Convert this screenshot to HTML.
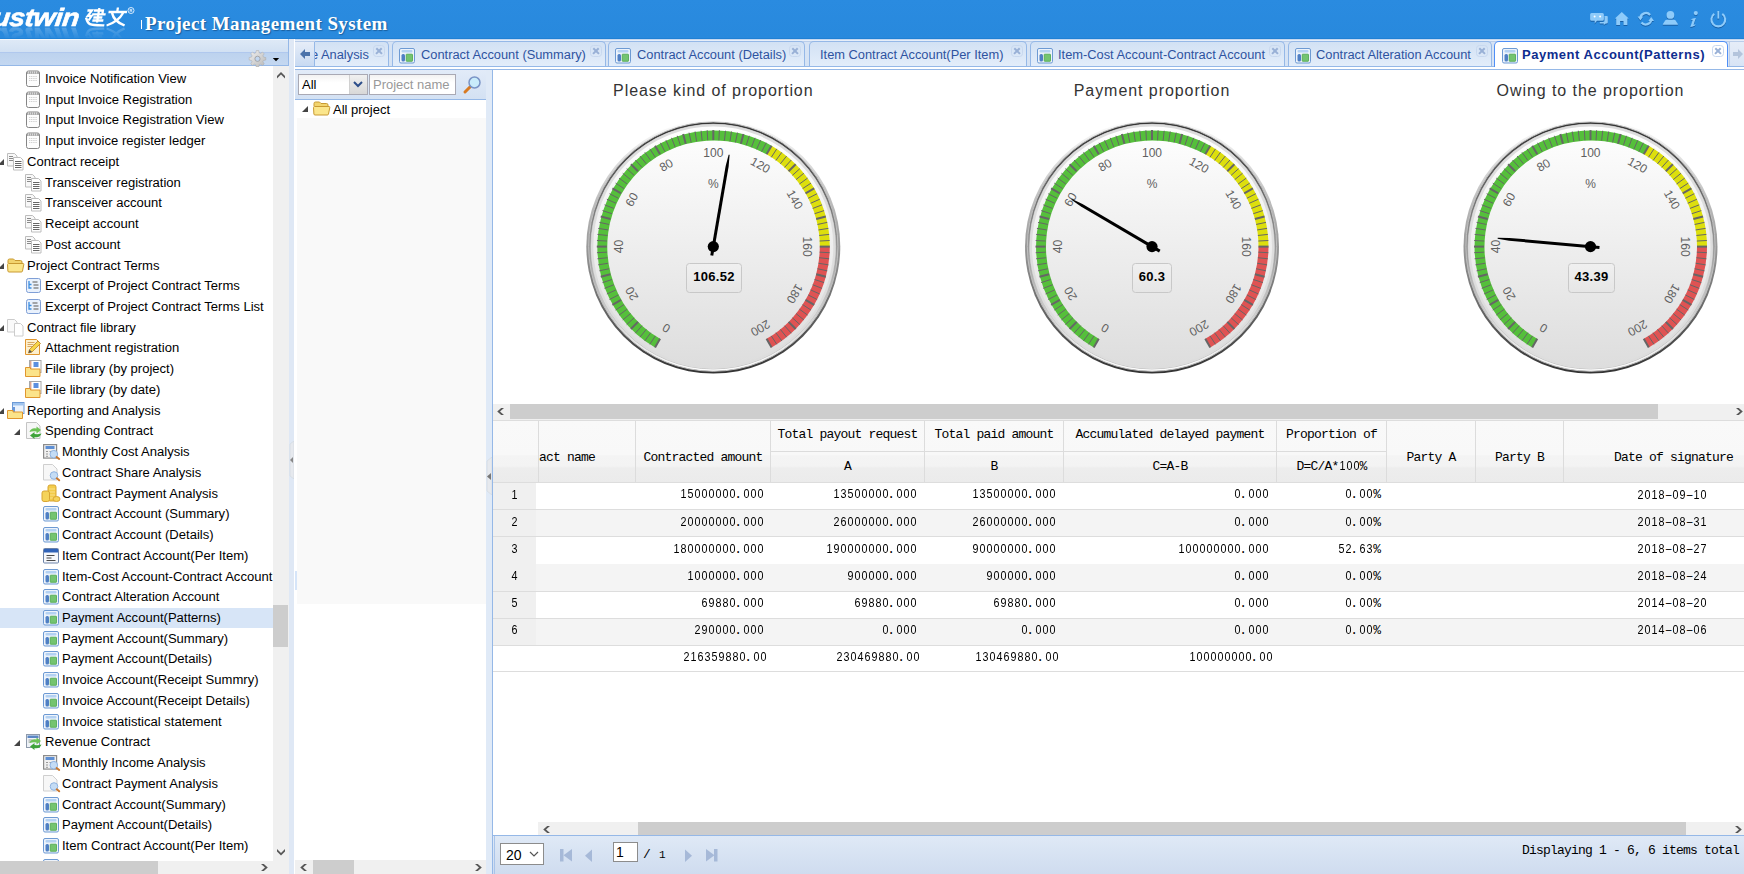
<!DOCTYPE html><html><head><meta charset="utf-8"><style>
*{margin:0;padding:0;box-sizing:border-box}
html,body{width:1744px;height:874px;overflow:hidden;background:#fff;font-family:"Liberation Sans",sans-serif;position:relative}
.a{position:absolute}
#hdr{left:0;top:0;width:1744px;height:39px;background:linear-gradient(#2a8be0 0,#2889dd 97%,#2080d4 97.5%)}
.tt{font-size:13.05px;color:#000;white-space:nowrap;line-height:14px}
.mono{font-family:"Liberation Mono",monospace;font-size:12px;letter-spacing:-0.2px;white-space:nowrap;color:#000}
.nn{white-space:nowrap;font-size:0;line-height:14px;height:14px}
.nd{display:inline-block;width:7px;text-align:center;font:12.8px/14px "Liberation Sans",sans-serif;color:#000;vertical-align:baseline;transform:scaleX(.84)}
.np{display:inline-block;width:7px;text-align:left;font:13px/14px "Liberation Mono",monospace;color:#000;vertical-align:baseline;text-indent:-2px}
.nm{display:inline-block;width:7px;text-align:center;font:13px/14px "Liberation Mono",monospace;color:#000;vertical-align:baseline}
.gl{font-family:"Liberation Sans",sans-serif;font-size:12px;fill:#606060}
.sb{background:#f0f0f0}
.th{background:#cdcdcd}
.tab{top:41px;height:25px;border:1px solid #95b8e7;border-bottom:0;border-radius:5px 5px 0 0;background:linear-gradient(#d2e1f4,#e3edfa)}
.tabt{top:47px;font-size:12.5px;color:#2e53a0;white-space:nowrap;line-height:14px}
.cls{top:45px;width:12px;height:12px;border:1px solid #c8d8ef;border-radius:3.5px}
.cls:before,.cls:after{content:"";position:absolute;left:1px;top:3.8px;width:8px;height:2.4px;background:#98b0d6;transform:rotate(45deg)}
.cls:after{transform:rotate(-45deg)}
</style></head><body>
<div id="hdr" class="a"></div>
<div class="a" style="left:0;top:0;width:140px;height:27px;-webkit-box-reflect:below 0px linear-gradient(transparent 55%,rgba(255,255,255,0.22))">
<div class="a" style="left:-5px;top:2px;font:italic bold 25px/30px 'Liberation Sans',sans-serif;color:#fff;-webkit-text-stroke:0.6px #fff;letter-spacing:-0.4px;transform:scaleX(1.12) skewX(-6deg);transform-origin:0 0">ustwin</div>
<svg class="a" style="left:84px;top:7px;overflow:visible" width="52" height="21" viewBox="0 0 52 21">
<g transform="skewX(-9) translate(2.5,0)" stroke="#fff" stroke-width="2.3" fill="none" stroke-linecap="butt" stroke-linejoin="miter">
<path d="M1.5 3.5h4.5l-3.3 5.3h3.8l-2.3 4.7"/><path d="M1.2 10.5q2.3 5.5 5 6.6 3 1.3 14.5 1.2"/>
<path d="M8 3.5h9v3.8M6.8 7.3h13.5M8.5 10.5h9M8 13.5h11M13 1v14.5"/>
<path d="M31.5 .5v3.3M22.8 5h18.5M26.5 6q3.2 8.5 14.5 12.5M37.5 6q-3.2 8.5 -14.5 12.5"/>
</g><circle cx="47" cy="3.5" r="3" fill="none" stroke="#e8f3ff" stroke-width=".9"/><text x="47" y="5.1" text-anchor="middle" style="font:bold 4.2px 'Liberation Sans'" fill="#e8f3ff">R</text></svg>
</div>
<div class="a" style="left:140.5px;top:20px;width:1.2px;height:9px;background:#fff"></div>
<div class="a" style="left:145px;top:11.5px;font:bold 19px/24px 'Liberation Serif',serif;color:#fff;letter-spacing:0.4px;text-shadow:1px 1px 1px #1a5f9e">Project Management System</div>
<svg class="a" style="left:1580px;top:0px;filter:drop-shadow(0.8px 1px 0.6px rgba(10,60,120,0.55))" width="160" height="39" viewBox="0 0 160 39" fill="#8ecbfa">
<path d="M24.5 16h2.3a1 1 0 0 1 1 1v5.5a1 1 0 0 1-1 1h-1l-2 1.6v-1.6h-4v-1.5h3a1.6 1.6 0 0 0 1.7-1.6z"/>
<path d="M11.6 13h10.8a1.5 1.5 0 0 1 1.5 1.5v4.8a1.5 1.5 0 0 1-1.5 1.5h-5.4l-2.3 2.6v-2.6h-3.1a1.5 1.5 0 0 1-1.5-1.5v-4.8a1.5 1.5 0 0 1 1.5-1.5z"/>
<circle cx="14.6" cy="16.4" r="1" fill="#fff"/><circle cx="20.1" cy="16.4" r="1" fill="#fff"/>
<path d="M41.8 12l6.9 6.6h-1.3v6.4h-3.9v-4h-3.4v4h-3.9v-6.4h-1.3z"/>
<path d="M60.3 18.3a5.6 5.6 0 0 1 9.8-3.4" stroke="#8ecbfa" stroke-width="2.3" fill="none"/><path d="M57.6 16.6h5.6l-2.8 3.8z"/>
<path d="M71.3 19.2a5.6 5.6 0 0 1-9.8 3.4" stroke="#8ecbfa" stroke-width="2.3" fill="none"/><path d="M74 20.9h-5.6l2.8-3.8z"/>
<circle cx="90.4" cy="14.9" r="3.9"/><path d="M86.8 19.8h7.2q1 0 1.6.8l2.3 3.4q.5.8-.5.8h-14q-1 0-.5-.8l2.3-3.4q.6-.8 1.6-.8z"/>
<circle cx="115.8" cy="13.1" r="2.1"/><path d="M110.6 19.6q2.5-1.8 5.3-1.6l-2.2 6.2q-.2.8.6.5l1.2-.6-.5 1.5q-2.3 1.4-4.7 1.3l2.3-6.6q.2-.6-.5-.5z"/>
<path d="M134.3 13.9a6.9 6.9 0 1 0 8 0" stroke="#8ecbfa" stroke-width="2.1" fill="none"/><path d="M138.3 11v7.6" stroke="#8ecbfa" stroke-width="1.8"/>
</svg>
<div class="a" style="left:0;top:39px;width:289px;height:27px;border-right:1px solid #95b8e7;border-bottom:1px solid #95b8e7;background:linear-gradient(#dfeaf7 0,#d2e1f3 48%,#bcd2ee 52%,#c4d8f1 100%)"></div>
<div class="a" style="left:0;top:39px;width:288px;height:1px;background:#f4f8fd"></div>
<div class="a" style="left:0;top:52px;width:288px;height:1px;background:#b0c8ee"></div>
<svg class="a" style="left:248px;top:49px" width="36" height="18" viewBox="0 0 36 18">
<defs><linearGradient id="gearg" x1="0" y1="0" x2="1" y2="1"><stop offset="0" stop-color="#f0f0f0"/><stop offset="1" stop-color="#b8b8b8"/></linearGradient></defs>
<g fill="url(#gearg)" stroke="#a8a8a8" stroke-width=".5">
<path d="M8.3 1.5h2.4l.5 2.3 1.3.6 2-1.3 1.7 1.7-1.3 2 .6 1.3 2.3.5v2.4l-2.3.5-.6 1.3 1.3 2-1.7 1.7-2-1.3-1.3.6-.5 2.3h-2.4l-.5-2.3-1.3-.6-2 1.3-1.7-1.7 1.3-2-.6-1.3-2.3-.5v-2.4l2.3-.5.6-1.3-1.3-2 1.7-1.7 2 1.3 1.3-.6z"/></g>
<circle cx="9.5" cy="9.8" r="2.6" fill="#c2d6ef" stroke="#9a9a9a" stroke-width=".8"/>
<path d="M24.8 8.9h6.4l-3.2 3.3z" fill="#000"/></svg>
<div class="a" style="left:0;top:66px;width:273px;height:795px;overflow:hidden">
<svg class="a" style="left:25px;top:4px;overflow:visible" width="18" height="18" viewBox="0 0 18 18"><rect x="1.5" y="1" width="13" height="15.5" rx="2" fill="#fdfdfd" stroke="#858585"/><rect x="2" y="1.3" width="12" height="2.6" fill="#a6a6a6"/><path d="M3.5 1.5v2M5.5 1.5v2M7.5 1.5v2M9.5 1.5v2M11.5 1.5v2" stroke="#eee" stroke-width=".7"/><path d="M4 6.5h8M4 8.5h8M4 10.5h8" stroke="#d2d2d2" stroke-dasharray="1.2 .6"/></svg>
<div class="a tt" style="left:45px;top:6.0px">Invoice Notification View</div>
<svg class="a" style="left:25px;top:25px;overflow:visible" width="18" height="18" viewBox="0 0 18 18"><rect x="1.5" y="1" width="13" height="15.5" rx="2" fill="#fdfdfd" stroke="#858585"/><rect x="2" y="1.3" width="12" height="2.6" fill="#a6a6a6"/><path d="M3.5 1.5v2M5.5 1.5v2M7.5 1.5v2M9.5 1.5v2M11.5 1.5v2" stroke="#eee" stroke-width=".7"/><path d="M4 6.5h8M4 8.5h8M4 10.5h8" stroke="#d2d2d2" stroke-dasharray="1.2 .6"/></svg>
<div class="a tt" style="left:45px;top:27.0px">Input Invoice Registration</div>
<svg class="a" style="left:25px;top:45px;overflow:visible" width="18" height="18" viewBox="0 0 18 18"><rect x="1.5" y="1" width="13" height="15.5" rx="2" fill="#fdfdfd" stroke="#858585"/><rect x="2" y="1.3" width="12" height="2.6" fill="#a6a6a6"/><path d="M3.5 1.5v2M5.5 1.5v2M7.5 1.5v2M9.5 1.5v2M11.5 1.5v2" stroke="#eee" stroke-width=".7"/><path d="M4 6.5h8M4 8.5h8M4 10.5h8" stroke="#d2d2d2" stroke-dasharray="1.2 .6"/></svg>
<div class="a tt" style="left:45px;top:47.0px">Input Invoice Registration View</div>
<svg class="a" style="left:25px;top:66px;overflow:visible" width="18" height="18" viewBox="0 0 18 18"><rect x="1.5" y="1" width="13" height="15.5" rx="2" fill="#fdfdfd" stroke="#858585"/><rect x="2" y="1.3" width="12" height="2.6" fill="#a6a6a6"/><path d="M3.5 1.5v2M5.5 1.5v2M7.5 1.5v2M9.5 1.5v2M11.5 1.5v2" stroke="#eee" stroke-width=".7"/><path d="M4 6.5h8M4 8.5h8M4 10.5h8" stroke="#d2d2d2" stroke-dasharray="1.2 .6"/></svg>
<div class="a tt" style="left:45px;top:68.0px">Input invoice register ledger</div>
<svg class="a" style="left:-2px;top:92px" width="8" height="8"><path d="M6 1v6h-6z" fill="#444"/></svg>
<svg class="a" style="left:7px;top:87px;overflow:visible" width="18" height="18" viewBox="0 0 18 18"><path d="M.5 .5h7l2.5 2.5v10h-9.5z" fill="#f8f8f8" stroke="#bdbdbd"/><path d="M2 3.5h4M2 5.5h5M2 7.5h4" stroke="#8a8a8a"/><path d="M6.5 4.5h7l2.5 2.5v10h-9.5z" fill="#fff" stroke="#bdbdbd"/><path d="M8 8.5h6.5M8 10.5h6.5M8 12.5h6.5M8 14.5h6.5" stroke="#666"/></svg>
<div class="a tt" style="left:27px;top:89.0px">Contract receipt</div>
<svg class="a" style="left:25px;top:108px;overflow:visible" width="18" height="18" viewBox="0 0 18 18"><path d="M.5 .5h7l2.5 2.5v10h-9.5z" fill="#f8f8f8" stroke="#bdbdbd"/><path d="M2 3.5h4M2 5.5h5M2 7.5h4" stroke="#8a8a8a"/><path d="M6.5 4.5h7l2.5 2.5v10h-9.5z" fill="#fff" stroke="#bdbdbd"/><path d="M8 8.5h6.5M8 10.5h6.5M8 12.5h6.5M8 14.5h6.5" stroke="#666"/></svg>
<div class="a tt" style="left:45px;top:110.0px">Transceiver registration</div>
<svg class="a" style="left:25px;top:128px;overflow:visible" width="18" height="18" viewBox="0 0 18 18"><path d="M.5 .5h7l2.5 2.5v10h-9.5z" fill="#f8f8f8" stroke="#bdbdbd"/><path d="M2 3.5h4M2 5.5h5M2 7.5h4" stroke="#8a8a8a"/><path d="M6.5 4.5h7l2.5 2.5v10h-9.5z" fill="#fff" stroke="#bdbdbd"/><path d="M8 8.5h6.5M8 10.5h6.5M8 12.5h6.5M8 14.5h6.5" stroke="#666"/></svg>
<div class="a tt" style="left:45px;top:130.0px">Transceiver account</div>
<svg class="a" style="left:25px;top:149px;overflow:visible" width="18" height="18" viewBox="0 0 18 18"><path d="M.5 .5h7l2.5 2.5v10h-9.5z" fill="#f8f8f8" stroke="#bdbdbd"/><path d="M2 3.5h4M2 5.5h5M2 7.5h4" stroke="#8a8a8a"/><path d="M6.5 4.5h7l2.5 2.5v10h-9.5z" fill="#fff" stroke="#bdbdbd"/><path d="M8 8.5h6.5M8 10.5h6.5M8 12.5h6.5M8 14.5h6.5" stroke="#666"/></svg>
<div class="a tt" style="left:45px;top:151.0px">Receipt account</div>
<svg class="a" style="left:25px;top:170px;overflow:visible" width="18" height="18" viewBox="0 0 18 18"><path d="M.5 .5h7l2.5 2.5v10h-9.5z" fill="#f8f8f8" stroke="#bdbdbd"/><path d="M2 3.5h4M2 5.5h5M2 7.5h4" stroke="#8a8a8a"/><path d="M6.5 4.5h7l2.5 2.5v10h-9.5z" fill="#fff" stroke="#bdbdbd"/><path d="M8 8.5h6.5M8 10.5h6.5M8 12.5h6.5M8 14.5h6.5" stroke="#666"/></svg>
<div class="a tt" style="left:45px;top:172.0px">Post account</div>
<svg class="a" style="left:-2px;top:196px" width="8" height="8"><path d="M6 1v6h-6z" fill="#444"/></svg>
<svg class="a" style="left:7px;top:191px;overflow:visible" width="18" height="18" viewBox="0 0 18 18"><path d="M1 6v-2.5q0-1.5 1.5-1.5h4l1.5 1.5h5.5q1.5 0 1.5 1.5v1" fill="#f2d46e" stroke="#c99a32"/><path d="M.5 7.5q0-1 1-1h14.5q1 0 .8 1l-1.3 6.5q-.2 1-1.2 1h-12.3q-1 0-1.1-1z" fill="#fbe68c" stroke="#c99a32"/></svg>
<div class="a tt" style="left:27px;top:193.0px">Project Contract Terms</div>
<svg class="a" style="left:25px;top:211px;overflow:visible" width="18" height="18" viewBox="0 0 18 18"><rect x="1.5" y="1.5" width="14" height="14" rx="2" fill="#e9f1fc" stroke="#7f9fd6"/><path d="M4 4v7h2.5M4 7.5h2.5" stroke="#3d8fe0" stroke-width="1.3" fill="none"/><path d="M7.5 5h5M8.5 8h5M8.5 11h5" stroke="#8a8a8a" stroke-width="1.5"/></svg>
<div class="a tt" style="left:45px;top:213.0px">Excerpt of Project Contract Terms</div>
<svg class="a" style="left:25px;top:232px;overflow:visible" width="18" height="18" viewBox="0 0 18 18"><rect x="1.5" y="1.5" width="14" height="14" rx="2" fill="#e9f1fc" stroke="#7f9fd6"/><path d="M4 4v7h2.5M4 7.5h2.5" stroke="#3d8fe0" stroke-width="1.3" fill="none"/><path d="M7.5 5h5M8.5 8h5M8.5 11h5" stroke="#8a8a8a" stroke-width="1.5"/></svg>
<div class="a tt" style="left:45px;top:234.0px">Excerpt of Project Contract Terms List</div>
<svg class="a" style="left:-2px;top:258px" width="8" height="8"><path d="M6 1v6h-6z" fill="#444"/></svg>
<svg class="a" style="left:7px;top:253px;overflow:visible" width="18" height="18" viewBox="0 0 18 18"><path d="M.5 .5h7l2.5 2.5v10h-9.5z" fill="#fafafa" stroke="#cccccc"/><path d="M7.5 4.5h6l2.5 2.5v10h-8.5z" fill="#fff" stroke="#cccccc"/></svg>
<div class="a tt" style="left:27px;top:255.0px">Contract file library</div>
<svg class="a" style="left:25px;top:273px;overflow:visible" width="18" height="18" viewBox="0 0 18 18"><path d="M.5 .5h11l3 3v12h-14z" fill="#fdf0cf" stroke="#e0962e"/><path d="M2.5 3.5h7M2.5 5.5h6M2.5 7.5h5" stroke="#d9a860"/><path d="M3.5 14l1-3.5 8.5-8.5 2.5 2.5-8.5 8.5z" fill="#f7d548" stroke="#b9812a" stroke-width=".8"/><path d="M3.5 14l1-3.5 2.5 2.5z" fill="#555"/></svg>
<div class="a tt" style="left:45px;top:275.0px">Attachment registration</div>
<svg class="a" style="left:25px;top:294px;overflow:visible" width="18" height="18" viewBox="0 0 18 18"><rect x="4.5" y=".5" width="11.5" height="12" fill="#fff" stroke="#a8a8a8"/><rect x="8.5" y="2" width="5" height="5" fill="#5b8fe0"/><path d="M5.8 1v8" stroke="#c0603b" stroke-width=".8"/><path d="M.5 7.5h5v1.5h9.5v7.5h-14.5z" fill="#fbe38a" stroke="#e0962e"/></svg>
<div class="a tt" style="left:45px;top:296.0px">File library (by project)</div>
<svg class="a" style="left:25px;top:315px;overflow:visible" width="18" height="18" viewBox="0 0 18 18"><rect x="4.5" y=".5" width="11.5" height="12" fill="#fff" stroke="#a8a8a8"/><rect x="8.5" y="2" width="5" height="5" fill="#5b8fe0"/><path d="M5.8 1v8" stroke="#c0603b" stroke-width=".8"/><path d="M.5 7.5h5v1.5h9.5v7.5h-14.5z" fill="#fbe38a" stroke="#e0962e"/></svg>
<div class="a tt" style="left:45px;top:317.0px">File library (by date)</div>
<svg class="a" style="left:-2px;top:341px" width="8" height="8"><path d="M6 1v6h-6z" fill="#444"/></svg>
<svg class="a" style="left:7px;top:336px;overflow:visible" width="18" height="18" viewBox="0 0 18 18"><rect x="5.5" y=".5" width="11.5" height="11" fill="#eaf2fc" stroke="#6c9ad6"/><rect x="6" y="1" width="10.5" height="2.5" fill="#9fc4ef"/><path d="M7 5v5" stroke="#3e7ad0" stroke-width="1.5"/><path d="M.5 8.5h5.5v1.5h9.5v6.5h-15z" fill="#fbe38a" stroke="#e0962e"/></svg>
<div class="a tt" style="left:27px;top:338.0px">Reporting and Analysis</div>
<svg class="a" style="left:13px;top:361.5px" width="8" height="8"><path d="M7 1v6h-6z" fill="#444"/></svg>
<svg class="a" style="left:25px;top:356px;overflow:visible" width="18" height="18" viewBox="0 0 18 18"><path d="M1.5 .5h10l3.5 3.5v12.5h-13.5z" fill="#f6f6f6" stroke="#c4c4c4"/><path d="M4.5 10q1.5-4.5 7-3.5v-2l4.5 3.5-4.5 3.5v-2q-4-.5-7 .5z" fill="#6cc255"/><path d="M16.5 11.5q-1.5 4.5-7 3.5v2l-4.5-3.5 4.5-3.5v2q4 .5 7-.5z" fill="#3ea33a"/></svg>
<div class="a tt" style="left:45px;top:358.0px">Spending Contract</div>
<svg class="a" style="left:43px;top:377px;overflow:visible" width="18" height="18" viewBox="0 0 18 18"><rect x=".6" y="1.6" width="13" height="13.5" fill="#f0f0f0" stroke="#8c8c8c" stroke-width="1.2"/><rect x="2.5" y="3" width="9" height="3" fill="#5e8fd4"/><path d="M3 8.5h2M6.5 8.5h2M3 11h2M3 13.3h2" stroke="#999"/><circle cx="10.8" cy="11.2" r="3.8" fill="#c4dcf5" stroke="#8fb3e0"/><path d="M13.6 14l2.6 2" stroke="#c9772e" stroke-width="2" stroke-linecap="round"/></svg>
<div class="a tt" style="left:62px;top:379.0px">Monthly Cost Analysis</div>
<svg class="a" style="left:43px;top:398px;overflow:visible" width="18" height="18" viewBox="0 0 18 18"><path d="M.5 .5h9l4.5 4.5v11h-13.5z" fill="#f7f7f7" stroke="#cfcfcf"/><circle cx="11" cy="11.5" r="3.8" fill="#c4dcf5" stroke="#8fb3e0"/><path d="M13.8 14.3l2.4 2" stroke="#c9772e" stroke-width="2" stroke-linecap="round"/></svg>
<div class="a tt" style="left:62px;top:400.0px">Contract Share Analysis</div>
<svg class="a" style="left:43px;top:419px;overflow:visible" width="18" height="18" viewBox="0 0 18 18"><rect x="5" y="0" width="8" height="16" rx="2" fill="#f3cc4a" stroke="#d8a532"/><path d="M6 4h6M6 7h6M6 10h6M6 13h6" stroke="#f9e49a" stroke-width=".8"/><rect x="-1" y="6" width="7.5" height="10.5" rx="2" fill="#f5d35a" stroke="#d8a532"/><ellipse cx="13.5" cy="14" rx="3.5" ry="2.5" fill="#f5d35a" stroke="#d8a532"/></svg>
<div class="a tt" style="left:62px;top:421.0px">Contract Payment Analysis</div>
<svg class="a" style="left:43px;top:439px;overflow:visible" width="18" height="18" viewBox="0 0 18 18"><rect x=".5" y="1.5" width="15" height="14.5" rx="1.5" fill="#edf3fb" stroke="#6d9ad3"/><rect x="2.5" y="3" width="11" height="2.5" rx="1" fill="#b3d1f2"/><rect x="2.5" y="7" width="3.5" height="7.5" rx="1.5" fill="#4f7fc4"/><rect x="7.2" y="7.2" width="6.3" height="7.1" rx=".5" fill="#74c470" stroke="#4aa64a" stroke-width=".8"/></svg>
<div class="a tt" style="left:62px;top:441.0px">Contract Account (Summary)</div>
<svg class="a" style="left:43px;top:460px;overflow:visible" width="18" height="18" viewBox="0 0 18 18"><rect x=".5" y="1.5" width="15" height="14.5" rx="1.5" fill="#edf3fb" stroke="#6d9ad3"/><rect x="2.5" y="3" width="11" height="2.5" rx="1" fill="#b3d1f2"/><rect x="2.5" y="7" width="3.5" height="7.5" rx="1.5" fill="#4f7fc4"/><rect x="7.2" y="7.2" width="6.3" height="7.1" rx=".5" fill="#74c470" stroke="#4aa64a" stroke-width=".8"/></svg>
<div class="a tt" style="left:62px;top:462.0px">Contract Account (Details)</div>
<svg class="a" style="left:43px;top:481px;overflow:visible" width="18" height="18" viewBox="0 0 18 18"><rect x=".5" y="1.5" width="15" height="14.5" rx="1" fill="#f5f7fb" stroke="#6c83a8"/><rect x="1" y="2" width="14" height="3.5" fill="#2f62b8"/><path d="M3.5 8.5h8M3.5 11h5M3.5 13.5h9" stroke="#4a4a4a" stroke-width="1.1"/></svg>
<div class="a tt" style="left:62px;top:483.0px">Item Contract Account(Per Item)</div>
<svg class="a" style="left:43px;top:502px;overflow:visible" width="18" height="18" viewBox="0 0 18 18"><rect x=".5" y="1.5" width="15" height="14.5" rx="1.5" fill="#edf3fb" stroke="#6d9ad3"/><rect x="2.5" y="3" width="11" height="2.5" rx="1" fill="#b3d1f2"/><rect x="2.5" y="7" width="3.5" height="7.5" rx="1.5" fill="#4f7fc4"/><rect x="7.2" y="7.2" width="6.3" height="7.1" rx=".5" fill="#74c470" stroke="#4aa64a" stroke-width=".8"/></svg>
<div class="a tt" style="left:62px;top:504.0px">Item-Cost Account-Contract Account</div>
<svg class="a" style="left:43px;top:522px;overflow:visible" width="18" height="18" viewBox="0 0 18 18"><rect x=".5" y="1.5" width="15" height="14.5" rx="1.5" fill="#edf3fb" stroke="#6d9ad3"/><rect x="2.5" y="3" width="11" height="2.5" rx="1" fill="#b3d1f2"/><rect x="2.5" y="7" width="3.5" height="7.5" rx="1.5" fill="#4f7fc4"/><rect x="7.2" y="7.2" width="6.3" height="7.1" rx=".5" fill="#74c470" stroke="#4aa64a" stroke-width=".8"/></svg>
<div class="a tt" style="left:62px;top:524.0px">Contract Alteration Account</div>
<div class="a" style="left:0;top:542px;width:273px;height:20px;background:#d7e5f7"></div>
<svg class="a" style="left:43px;top:543px;overflow:visible" width="18" height="18" viewBox="0 0 18 18"><rect x=".5" y="1.5" width="15" height="14.5" rx="1.5" fill="#edf3fb" stroke="#6d9ad3"/><rect x="2.5" y="3" width="11" height="2.5" rx="1" fill="#b3d1f2"/><rect x="2.5" y="7" width="3.5" height="7.5" rx="1.5" fill="#4f7fc4"/><rect x="7.2" y="7.2" width="6.3" height="7.1" rx=".5" fill="#74c470" stroke="#4aa64a" stroke-width=".8"/></svg>
<div class="a tt" style="left:62px;top:545.0px">Payment Account(Patterns)</div>
<svg class="a" style="left:43px;top:564px;overflow:visible" width="18" height="18" viewBox="0 0 18 18"><rect x=".5" y="1.5" width="15" height="14.5" rx="1.5" fill="#edf3fb" stroke="#6d9ad3"/><rect x="2.5" y="3" width="11" height="2.5" rx="1" fill="#b3d1f2"/><rect x="2.5" y="7" width="3.5" height="7.5" rx="1.5" fill="#4f7fc4"/><rect x="7.2" y="7.2" width="6.3" height="7.1" rx=".5" fill="#74c470" stroke="#4aa64a" stroke-width=".8"/></svg>
<div class="a tt" style="left:62px;top:566.0px">Payment Account(Summary)</div>
<svg class="a" style="left:43px;top:584px;overflow:visible" width="18" height="18" viewBox="0 0 18 18"><rect x=".5" y="1.5" width="15" height="14.5" rx="1.5" fill="#edf3fb" stroke="#6d9ad3"/><rect x="2.5" y="3" width="11" height="2.5" rx="1" fill="#b3d1f2"/><rect x="2.5" y="7" width="3.5" height="7.5" rx="1.5" fill="#4f7fc4"/><rect x="7.2" y="7.2" width="6.3" height="7.1" rx=".5" fill="#74c470" stroke="#4aa64a" stroke-width=".8"/></svg>
<div class="a tt" style="left:62px;top:586.0px">Payment Account(Details)</div>
<svg class="a" style="left:43px;top:605px;overflow:visible" width="18" height="18" viewBox="0 0 18 18"><rect x=".5" y="1.5" width="15" height="14.5" rx="1.5" fill="#edf3fb" stroke="#6d9ad3"/><rect x="2.5" y="3" width="11" height="2.5" rx="1" fill="#b3d1f2"/><rect x="2.5" y="7" width="3.5" height="7.5" rx="1.5" fill="#4f7fc4"/><rect x="7.2" y="7.2" width="6.3" height="7.1" rx=".5" fill="#74c470" stroke="#4aa64a" stroke-width=".8"/></svg>
<div class="a tt" style="left:62px;top:607.0px">Invoice Account(Receipt Summry)</div>
<svg class="a" style="left:43px;top:626px;overflow:visible" width="18" height="18" viewBox="0 0 18 18"><rect x=".5" y="1.5" width="15" height="14.5" rx="1.5" fill="#edf3fb" stroke="#6d9ad3"/><rect x="2.5" y="3" width="11" height="2.5" rx="1" fill="#b3d1f2"/><rect x="2.5" y="7" width="3.5" height="7.5" rx="1.5" fill="#4f7fc4"/><rect x="7.2" y="7.2" width="6.3" height="7.1" rx=".5" fill="#74c470" stroke="#4aa64a" stroke-width=".8"/></svg>
<div class="a tt" style="left:62px;top:628.0px">Invoice Account(Receipt Details)</div>
<svg class="a" style="left:43px;top:647px;overflow:visible" width="18" height="18" viewBox="0 0 18 18"><rect x=".5" y="1.5" width="15" height="14.5" rx="1.5" fill="#edf3fb" stroke="#6d9ad3"/><rect x="2.5" y="3" width="11" height="2.5" rx="1" fill="#b3d1f2"/><rect x="2.5" y="7" width="3.5" height="7.5" rx="1.5" fill="#4f7fc4"/><rect x="7.2" y="7.2" width="6.3" height="7.1" rx=".5" fill="#74c470" stroke="#4aa64a" stroke-width=".8"/></svg>
<div class="a tt" style="left:62px;top:649.0px">Invoice statistical statement</div>
<svg class="a" style="left:13px;top:672.5px" width="8" height="8"><path d="M7 1v6h-6z" fill="#444"/></svg>
<svg class="a" style="left:25px;top:667px;overflow:visible" width="18" height="18" viewBox="0 0 18 18"><rect x="1.5" y="1.5" width="13" height="13" fill="#eef2f7" stroke="#8e9aab"/><rect x="2.5" y="2.5" width="11" height="2.5" fill="#5a86c4"/><path d="M3.5 7h4M3.5 9h3" stroke="#999"/><path d="M4.5 10q1.5-4.5 7-3.5v-2l4.5 3.5-4.5 3.5v-2q-4-.5-7 .5z" fill="#6cc255"/><path d="M16.5 11.5q-1.5 4.5-7 3.5v2l-4.5-3.5 4.5-3.5v2q4 .5 7-.5z" fill="#3ea33a"/></svg>
<div class="a tt" style="left:45px;top:669.0px">Revenue Contract</div>
<svg class="a" style="left:43px;top:688px;overflow:visible" width="18" height="18" viewBox="0 0 18 18"><rect x=".6" y="1.6" width="13" height="13.5" fill="#f0f0f0" stroke="#8c8c8c" stroke-width="1.2"/><rect x="2.5" y="3" width="9" height="3" fill="#5e8fd4"/><path d="M3 8.5h2M6.5 8.5h2M3 11h2M3 13.3h2" stroke="#999"/><circle cx="10.8" cy="11.2" r="3.8" fill="#c4dcf5" stroke="#8fb3e0"/><path d="M13.6 14l2.6 2" stroke="#c9772e" stroke-width="2" stroke-linecap="round"/></svg>
<div class="a tt" style="left:62px;top:690.0px">Monthly Income Analysis</div>
<svg class="a" style="left:43px;top:709px;overflow:visible" width="18" height="18" viewBox="0 0 18 18"><path d="M.5 .5h9l4.5 4.5v11h-13.5z" fill="#f7f7f7" stroke="#cfcfcf"/><circle cx="11" cy="11.5" r="3.8" fill="#c4dcf5" stroke="#8fb3e0"/><path d="M13.8 14.3l2.4 2" stroke="#c9772e" stroke-width="2" stroke-linecap="round"/></svg>
<div class="a tt" style="left:62px;top:711.0px">Contract Payment Analysis</div>
<svg class="a" style="left:43px;top:730px;overflow:visible" width="18" height="18" viewBox="0 0 18 18"><rect x=".5" y="1.5" width="15" height="14.5" rx="1.5" fill="#edf3fb" stroke="#6d9ad3"/><rect x="2.5" y="3" width="11" height="2.5" rx="1" fill="#b3d1f2"/><rect x="2.5" y="7" width="3.5" height="7.5" rx="1.5" fill="#4f7fc4"/><rect x="7.2" y="7.2" width="6.3" height="7.1" rx=".5" fill="#74c470" stroke="#4aa64a" stroke-width=".8"/></svg>
<div class="a tt" style="left:62px;top:732.0px">Contract Account(Summary)</div>
<svg class="a" style="left:43px;top:750px;overflow:visible" width="18" height="18" viewBox="0 0 18 18"><rect x=".5" y="1.5" width="15" height="14.5" rx="1.5" fill="#edf3fb" stroke="#6d9ad3"/><rect x="2.5" y="3" width="11" height="2.5" rx="1" fill="#b3d1f2"/><rect x="2.5" y="7" width="3.5" height="7.5" rx="1.5" fill="#4f7fc4"/><rect x="7.2" y="7.2" width="6.3" height="7.1" rx=".5" fill="#74c470" stroke="#4aa64a" stroke-width=".8"/></svg>
<div class="a tt" style="left:62px;top:752.0px">Payment Account(Details)</div>
<svg class="a" style="left:43px;top:771px;overflow:visible" width="18" height="18" viewBox="0 0 18 18"><rect x=".5" y="1.5" width="15" height="14.5" rx="1.5" fill="#edf3fb" stroke="#6d9ad3"/><rect x="2.5" y="3" width="11" height="2.5" rx="1" fill="#b3d1f2"/><rect x="2.5" y="7" width="3.5" height="7.5" rx="1.5" fill="#4f7fc4"/><rect x="7.2" y="7.2" width="6.3" height="7.1" rx=".5" fill="#74c470" stroke="#4aa64a" stroke-width=".8"/></svg>
<div class="a tt" style="left:62px;top:773.0px">Item Contract Account(Per Item)</div>
<svg class="a" style="left:43px;top:792px;overflow:visible" width="18" height="18" viewBox="0 0 18 18"><rect x=".5" y="1.5" width="15" height="14.5" rx="1.5" fill="#edf3fb" stroke="#6d9ad3"/><rect x="2.5" y="3" width="11" height="2.5" rx="1" fill="#b3d1f2"/><rect x="2.5" y="7" width="3.5" height="7.5" rx="1.5" fill="#4f7fc4"/><rect x="7.2" y="7.2" width="6.3" height="7.1" rx=".5" fill="#74c470" stroke="#4aa64a" stroke-width=".8"/></svg>
</div>
<div class="a sb" style="left:273px;top:66px;width:16px;height:808px"></div>
<div class="a th" style="left:273px;top:605px;width:15px;height:42px"></div>
<svg class="a" style="left:277px;top:72px" width="8" height="7"><path d="M0 4l4-4 4 4v2.5l-4-4-4 4z" fill="#575757"/></svg>
<svg class="a" style="left:277px;top:849px" width="8" height="7"><path d="M0 0l4 4 4-4v2.5l-4 4-4-4z" fill="#575757"/></svg>
<div class="a sb" style="left:0;top:861px;width:273px;height:13px"></div>
<div class="a th" style="left:0;top:861px;width:158px;height:13px"></div>
<svg class="a" style="left:261px;top:864px" width="8" height="7"><path d="M0 0h2.8l4 3.5-4 3.5h-2.8l4-3.5z" fill="#575757"/></svg>
<div class="a" style="left:289px;top:39px;width:5px;height:835px;background:#dfe8f5"></div>
<div class="a" style="left:294px;top:39px;width:1px;height:835px;background:#fff"></div>
<svg class="a" style="left:289px;top:441px" width="5" height="38"><path d="M5 0v38l-4-3v-32z" fill="#e6e9ee" stroke="#d0d6de" stroke-width=".6"/><path d="M4 16v6l-3-3z" fill="#888"/></svg>
<div class="a" style="left:295px;top:39px;width:1449px;height:28px;background:#d6e3f4;border-bottom:1px solid #95b8e7"></div>
<div class="a" style="left:295px;top:39px;width:1449px;height:1px;background:#c6d8f0"></div>
<div class="a" style="left:295px;top:40px;width:1449px;height:1px;background:#e6eef9"></div>
<div class="a" style="left:295px;top:41px;width:1449px;height:1px;background:#b9cdea"></div>
<div class="a" style="left:295px;top:67px;width:1449px;height:2px;background:#fff"></div>
<div class="a" style="left:295px;top:69px;width:1449px;height:1px;background:#95b8e7"></div>
<div class="a" style="left:295px;top:42px;width:20px;height:24px;background:linear-gradient(#e6edf8,#c8daf2);border-right:1px solid #95b8e7"></div>
<svg class="a" style="left:299px;top:48px" width="12" height="12"><path d="M1 6l5-5v3h5v4h-5v3z" fill="#4b73ab"/></svg>
<div class="a" style="left:1729px;top:42px;width:15px;height:24px;background:linear-gradient(#e6edf8,#d8e4f5);border-left:1px solid #b9cdea"></div>
<svg class="a" style="left:1733px;top:48px" width="11" height="12"><path d="M10 6l-5-5v3h-5v4h5v3z" fill="#b4c4dc"/></svg>
<div class="a" style="left:315px;top:41px;width:1414px;height:26px;overflow:hidden">
<div class="a tab" style="left:-20px;top:0;width:94px;height:25px"></div>
<div class="a" style="left:-4px;top:7px;font-size:12.85px;color:#2e53a0;white-space:nowrap;line-height:14px">e Analysis</div>
<div class="a cls" style="left:58px;top:4px"></div>
<div class="a tab" style="left:77px;top:0;width:214px;height:25px"></div>
<svg class="a" style="left:84px;top:6px;overflow:visible" width="18" height="18" viewBox="0 0 18 18"><rect x=".5" y="1.5" width="15" height="14.5" rx="1.5" fill="#edf3fb" stroke="#6d9ad3"/><rect x="2.5" y="3" width="11" height="2.5" rx="1" fill="#b3d1f2"/><rect x="2.5" y="7" width="3.5" height="7.5" rx="1.5" fill="#4f7fc4"/><rect x="7.2" y="7.2" width="6.3" height="7.1" rx=".5" fill="#74c470" stroke="#4aa64a" stroke-width=".8"/></svg>
<div class="a" style="left:106px;top:7px;font-size:12.85px;color:#2e53a0;white-space:nowrap;line-height:14px">Contract Account (Summary)</div>
<div class="a cls" style="left:275px;top:4px"></div>
<div class="a tab" style="left:293px;top:0;width:197px;height:25px"></div>
<svg class="a" style="left:300px;top:6px;overflow:visible" width="18" height="18" viewBox="0 0 18 18"><rect x=".5" y="1.5" width="15" height="14.5" rx="1.5" fill="#edf3fb" stroke="#6d9ad3"/><rect x="2.5" y="3" width="11" height="2.5" rx="1" fill="#b3d1f2"/><rect x="2.5" y="7" width="3.5" height="7.5" rx="1.5" fill="#4f7fc4"/><rect x="7.2" y="7.2" width="6.3" height="7.1" rx=".5" fill="#74c470" stroke="#4aa64a" stroke-width=".8"/></svg>
<div class="a" style="left:322px;top:7px;font-size:12.85px;color:#2e53a0;white-space:nowrap;line-height:14px">Contract Account (Details)</div>
<div class="a cls" style="left:474px;top:4px"></div>
<div class="a tab" style="left:494px;top:0;width:218px;height:25px"></div>
<div class="a" style="left:505px;top:7px;font-size:12.85px;color:#2e53a0;white-space:nowrap;line-height:14px">Item Contract Account(Per Item)</div>
<div class="a cls" style="left:696px;top:4px"></div>
<div class="a tab" style="left:715px;top:0;width:255px;height:25px"></div>
<svg class="a" style="left:722px;top:6px;overflow:visible" width="18" height="18" viewBox="0 0 18 18"><rect x=".5" y="1.5" width="15" height="14.5" rx="1.5" fill="#edf3fb" stroke="#6d9ad3"/><rect x="2.5" y="3" width="11" height="2.5" rx="1" fill="#b3d1f2"/><rect x="2.5" y="7" width="3.5" height="7.5" rx="1.5" fill="#4f7fc4"/><rect x="7.2" y="7.2" width="6.3" height="7.1" rx=".5" fill="#74c470" stroke="#4aa64a" stroke-width=".8"/></svg>
<div class="a" style="left:743px;top:7px;font-size:12.85px;color:#2e53a0;white-space:nowrap;line-height:14px">Item-Cost Account-Contract Account</div>
<div class="a cls" style="left:954px;top:4px"></div>
<div class="a tab" style="left:973px;top:0;width:204px;height:25px"></div>
<svg class="a" style="left:980px;top:6px;overflow:visible" width="18" height="18" viewBox="0 0 18 18"><rect x=".5" y="1.5" width="15" height="14.5" rx="1.5" fill="#edf3fb" stroke="#6d9ad3"/><rect x="2.5" y="3" width="11" height="2.5" rx="1" fill="#b3d1f2"/><rect x="2.5" y="7" width="3.5" height="7.5" rx="1.5" fill="#4f7fc4"/><rect x="7.2" y="7.2" width="6.3" height="7.1" rx=".5" fill="#74c470" stroke="#4aa64a" stroke-width=".8"/></svg>
<div class="a" style="left:1001px;top:7px;font-size:12.85px;color:#2e53a0;white-space:nowrap;line-height:14px">Contract Alteration Account</div>
<div class="a cls" style="left:1161px;top:4px"></div>
<div class="a" style="left:1179px;top:0;width:234px;height:27px;border:1px solid #4f8ff7;border-bottom:0;border-radius:5px 5px 0 0;background:#fff"></div>
<svg class="a" style="left:1187px;top:6px;overflow:visible" width="18" height="18" viewBox="0 0 18 18"><rect x=".5" y="1.5" width="15" height="14.5" rx="1.5" fill="#edf3fb" stroke="#6d9ad3"/><rect x="2.5" y="3" width="11" height="2.5" rx="1" fill="#b3d1f2"/><rect x="2.5" y="7" width="3.5" height="7.5" rx="1.5" fill="#4f7fc4"/><rect x="7.2" y="7.2" width="6.3" height="7.1" rx=".5" fill="#74c470" stroke="#4aa64a" stroke-width=".8"/></svg>
<div class="a" style="left:1207px;top:7px;font-size:13px;font-weight:bold;letter-spacing:0.52px;color:#0e2d8f;white-space:nowrap;line-height:14px">Payment Account(Patterns)</div>
<div class="a cls" style="left:1397px;top:4px"></div>
</div>
<div class="a" style="left:295px;top:70px;width:191px;height:30px;background:linear-gradient(#e2ebf8,#d3e1f3);border-bottom:1px solid #95b8e7"></div>
<div class="a" style="left:298px;top:74px;width:70px;height:21px;border:1px solid #a9a9b4;background:linear-gradient(#f2f2f2,#fff 40%)"></div>
<div class="a" style="left:349px;top:75px;width:18px;height:19px;background:linear-gradient(#f0f0f0,#d8d8d8);border-left:1px solid #d0d0d0"></div>
<svg class="a" style="left:352px;top:80px" width="12" height="10"><path d="M2 2l4 4 4-4" stroke="#2d4e8a" stroke-width="2" fill="none"/></svg>
<div class="a" style="left:302px;top:78px;font-size:13px;line-height:14px;color:#000">All</div>
<div class="a" style="left:369px;top:74px;width:87px;height:21px;border:1px solid #a9a9b4;background:linear-gradient(#f2f2f2,#fff 40%)"></div>
<div class="a" style="left:373px;top:78px;font-size:13px;line-height:14px;color:#999">Project name</div>
<svg class="a" style="left:462px;top:75px" width="20" height="20"><path d="M3 17l5-5" stroke="#d87a22" stroke-width="3" stroke-linecap="round"/><circle cx="12.5" cy="7.5" r="5.5" fill="#c9ecfb" stroke="#7a94c6" stroke-width="1.5"/></svg>
<div class="a" style="left:295px;top:100px;width:191px;height:774px;background:#fff"></div>
<div class="a" style="left:297px;top:118px;width:189px;height:486px;background:#f9f9f9"></div>
<svg class="a" style="left:301px;top:105px" width="8" height="8"><path d="M7 1v6h-6z" fill="#444"/></svg>
<svg class="a" style="left:313px;top:100px;overflow:visible" width="18" height="18" viewBox="0 0 18 18"><path d="M1 6v-2.5q0-1.5 1.5-1.5h4l1.5 1.5h5.5q1.5 0 1.5 1.5v1" fill="#f2d46e" stroke="#c99a32"/><path d="M.5 7.5q0-1 1-1h14.5q1 0 .8 1l-1.3 6.5q-.2 1-1.2 1h-12.3q-1 0-1.1-1z" fill="#fbe68c" stroke="#c99a32"/></svg>
<div class="a tt" style="left:333px;top:103px;font-size:13px">All project</div>
<div class="a" style="left:295px;top:571px;width:2px;height:19px;background:#d6e5f9"></div>
<div class="a sb" style="left:295px;top:860px;width:191px;height:14px"></div>
<div class="a th" style="left:313px;top:860px;width:41px;height:14px"></div>
<svg class="a" style="left:300px;top:864px" width="8" height="7"><path d="M7 0h-2.8l-4 3.5 4 3.5h2.8l-4-3.5z" fill="#575757"/></svg>
<svg class="a" style="left:475px;top:864px" width="8" height="7"><path d="M0 0h2.8l4 3.5-4 3.5h-2.8l4-3.5z" fill="#575757"/></svg>
<div class="a" style="left:486px;top:70px;width:6px;height:804px;background:#e0eaf7"></div>
<div class="a" style="left:492px;top:70px;width:1px;height:804px;background:#95b8e7"></div>
<svg class="a" style="left:486px;top:457px" width="6" height="38"><path d="M6 0v38l-5-4v-30z" fill="#e6e9ee" stroke="#d0d6de" stroke-width=".6"/><path d="M5 16v7l-4-3.5z" fill="#777"/></svg>
<svg class="a" style="left:493px;top:70px" width="1251" height="334" viewBox="493 70 1251 334">
<defs><linearGradient id="g713a" x1="0" y1="0" x2="0" y2="1"><stop offset="0" stop-color="#FFF"/><stop offset="1" stop-color="#333"/></linearGradient><linearGradient id="g713b" x1="0" y1="0" x2="0" y2="1"><stop offset="0" stop-color="#333"/><stop offset="1" stop-color="#FFF"/></linearGradient><linearGradient id="g713c" x1="0" y1="0" x2="0" y2="1"><stop offset="0" stop-color="#FFF"/><stop offset="1" stop-color="#DDD"/></linearGradient></defs>
<circle cx="713.3" cy="246.6" r="126.99" fill="url(#g713a)"/>
<circle cx="713.3" cy="246.6" r="124.66" fill="url(#g713b)" stroke="#C0C0C0" stroke-width="1"/>
<circle cx="713.3" cy="246.6" r="122.33" fill="url(#g713c)" stroke="#C0C0C0" stroke-width="1"/>
<circle cx="713.3" cy="246.6" r="121.16" fill="none" stroke="#DDD" stroke-width="2.33"/>
<path d="M655.05,347.49 A116.5,116.5 0 0 1 771.55,145.71 L766.55,154.37 A106.5,106.5 0 0 0 660.05,338.83 Z" fill="#55BF3B"/>
<path d="M771.55,145.71 A116.5,116.5 0 0 1 829.80,246.60 L819.80,246.60 A106.5,106.5 0 0 0 766.55,154.37 Z" fill="#DDDF0D"/>
<path d="M829.80,246.60 A116.5,116.5 0 0 1 771.55,347.49 L766.55,338.83 A106.5,106.5 0 0 0 819.80,246.60 Z" fill="#DF5353"/>
<line x1="655.05" y1="347.49" x2="660.05" y2="338.83" stroke="#666" stroke-width="2"/>
<line x1="649.85" y1="344.31" x2="655.30" y2="335.92" stroke="#666" stroke-width="1"/>
<line x1="644.82" y1="340.85" x2="650.70" y2="332.76" stroke="#666" stroke-width="1"/>
<line x1="639.98" y1="337.14" x2="646.28" y2="329.37" stroke="#666" stroke-width="1"/>
<line x1="635.35" y1="333.18" x2="642.04" y2="325.74" stroke="#666" stroke-width="1"/>
<line x1="630.92" y1="328.98" x2="637.99" y2="321.91" stroke="#666" stroke-width="2"/>
<line x1="626.72" y1="324.55" x2="634.16" y2="317.86" stroke="#666" stroke-width="1"/>
<line x1="622.76" y1="319.92" x2="630.53" y2="313.62" stroke="#666" stroke-width="1"/>
<line x1="619.05" y1="315.08" x2="627.14" y2="309.20" stroke="#666" stroke-width="1"/>
<line x1="615.59" y1="310.05" x2="623.98" y2="304.60" stroke="#666" stroke-width="1"/>
<line x1="612.41" y1="304.85" x2="621.07" y2="299.85" stroke="#666" stroke-width="2"/>
<line x1="609.50" y1="299.49" x2="618.41" y2="294.95" stroke="#666" stroke-width="1"/>
<line x1="606.87" y1="293.98" x2="616.01" y2="289.92" stroke="#666" stroke-width="1"/>
<line x1="604.54" y1="288.35" x2="613.87" y2="284.77" stroke="#666" stroke-width="1"/>
<line x1="602.50" y1="282.60" x2="612.01" y2="279.51" stroke="#666" stroke-width="1"/>
<line x1="600.77" y1="276.75" x2="610.43" y2="274.16" stroke="#666" stroke-width="2"/>
<line x1="599.35" y1="270.82" x2="609.13" y2="268.74" stroke="#666" stroke-width="1"/>
<line x1="598.23" y1="264.82" x2="608.11" y2="263.26" stroke="#666" stroke-width="1"/>
<line x1="597.44" y1="258.78" x2="607.38" y2="257.73" stroke="#666" stroke-width="1"/>
<line x1="596.96" y1="252.70" x2="606.95" y2="252.17" stroke="#666" stroke-width="1"/>
<line x1="596.80" y1="246.60" x2="606.80" y2="246.60" stroke="#666" stroke-width="2"/>
<line x1="596.96" y1="240.50" x2="606.95" y2="241.03" stroke="#666" stroke-width="1"/>
<line x1="597.44" y1="234.42" x2="607.38" y2="235.47" stroke="#666" stroke-width="1"/>
<line x1="598.23" y1="228.38" x2="608.11" y2="229.94" stroke="#666" stroke-width="1"/>
<line x1="599.35" y1="222.38" x2="609.13" y2="224.46" stroke="#666" stroke-width="1"/>
<line x1="600.77" y1="216.45" x2="610.43" y2="219.04" stroke="#666" stroke-width="2"/>
<line x1="602.50" y1="210.60" x2="612.01" y2="213.69" stroke="#666" stroke-width="1"/>
<line x1="604.54" y1="204.85" x2="613.87" y2="208.43" stroke="#666" stroke-width="1"/>
<line x1="606.87" y1="199.22" x2="616.01" y2="203.28" stroke="#666" stroke-width="1"/>
<line x1="609.50" y1="193.71" x2="618.41" y2="198.25" stroke="#666" stroke-width="1"/>
<line x1="612.41" y1="188.35" x2="621.07" y2="193.35" stroke="#666" stroke-width="2"/>
<line x1="615.59" y1="183.15" x2="623.98" y2="188.60" stroke="#666" stroke-width="1"/>
<line x1="619.05" y1="178.12" x2="627.14" y2="184.00" stroke="#666" stroke-width="1"/>
<line x1="622.76" y1="173.28" x2="630.53" y2="179.58" stroke="#666" stroke-width="1"/>
<line x1="626.72" y1="168.65" x2="634.16" y2="175.34" stroke="#666" stroke-width="1"/>
<line x1="630.92" y1="164.22" x2="637.99" y2="171.29" stroke="#666" stroke-width="2"/>
<line x1="635.35" y1="160.02" x2="642.04" y2="167.46" stroke="#666" stroke-width="1"/>
<line x1="639.98" y1="156.06" x2="646.28" y2="163.83" stroke="#666" stroke-width="1"/>
<line x1="644.82" y1="152.35" x2="650.70" y2="160.44" stroke="#666" stroke-width="1"/>
<line x1="649.85" y1="148.89" x2="655.30" y2="157.28" stroke="#666" stroke-width="1"/>
<line x1="655.05" y1="145.71" x2="660.05" y2="154.37" stroke="#666" stroke-width="2"/>
<line x1="660.41" y1="142.80" x2="664.95" y2="151.71" stroke="#666" stroke-width="1"/>
<line x1="665.92" y1="140.17" x2="669.98" y2="149.31" stroke="#666" stroke-width="1"/>
<line x1="671.55" y1="137.84" x2="675.13" y2="147.17" stroke="#666" stroke-width="1"/>
<line x1="677.30" y1="135.80" x2="680.39" y2="145.31" stroke="#666" stroke-width="1"/>
<line x1="683.15" y1="134.07" x2="685.74" y2="143.73" stroke="#666" stroke-width="2"/>
<line x1="689.08" y1="132.65" x2="691.16" y2="142.43" stroke="#666" stroke-width="1"/>
<line x1="695.08" y1="131.53" x2="696.64" y2="141.41" stroke="#666" stroke-width="1"/>
<line x1="701.12" y1="130.74" x2="702.17" y2="140.68" stroke="#666" stroke-width="1"/>
<line x1="707.20" y1="130.26" x2="707.73" y2="140.25" stroke="#666" stroke-width="1"/>
<line x1="713.30" y1="130.10" x2="713.30" y2="140.10" stroke="#666" stroke-width="2"/>
<line x1="719.40" y1="130.26" x2="718.87" y2="140.25" stroke="#666" stroke-width="1"/>
<line x1="725.48" y1="130.74" x2="724.43" y2="140.68" stroke="#666" stroke-width="1"/>
<line x1="731.52" y1="131.53" x2="729.96" y2="141.41" stroke="#666" stroke-width="1"/>
<line x1="737.52" y1="132.65" x2="735.44" y2="142.43" stroke="#666" stroke-width="1"/>
<line x1="743.45" y1="134.07" x2="740.86" y2="143.73" stroke="#666" stroke-width="2"/>
<line x1="749.30" y1="135.80" x2="746.21" y2="145.31" stroke="#666" stroke-width="1"/>
<line x1="755.05" y1="137.84" x2="751.47" y2="147.17" stroke="#666" stroke-width="1"/>
<line x1="760.68" y1="140.17" x2="756.62" y2="149.31" stroke="#666" stroke-width="1"/>
<line x1="766.19" y1="142.80" x2="761.65" y2="151.71" stroke="#666" stroke-width="1"/>
<line x1="771.55" y1="145.71" x2="766.55" y2="154.37" stroke="#666" stroke-width="2"/>
<line x1="776.75" y1="148.89" x2="771.30" y2="157.28" stroke="#666" stroke-width="1"/>
<line x1="781.78" y1="152.35" x2="775.90" y2="160.44" stroke="#666" stroke-width="1"/>
<line x1="786.62" y1="156.06" x2="780.32" y2="163.83" stroke="#666" stroke-width="1"/>
<line x1="791.25" y1="160.02" x2="784.56" y2="167.46" stroke="#666" stroke-width="1"/>
<line x1="795.68" y1="164.22" x2="788.61" y2="171.29" stroke="#666" stroke-width="2"/>
<line x1="799.88" y1="168.65" x2="792.44" y2="175.34" stroke="#666" stroke-width="1"/>
<line x1="803.84" y1="173.28" x2="796.07" y2="179.58" stroke="#666" stroke-width="1"/>
<line x1="807.55" y1="178.12" x2="799.46" y2="184.00" stroke="#666" stroke-width="1"/>
<line x1="811.01" y1="183.15" x2="802.62" y2="188.60" stroke="#666" stroke-width="1"/>
<line x1="814.19" y1="188.35" x2="805.53" y2="193.35" stroke="#666" stroke-width="2"/>
<line x1="817.10" y1="193.71" x2="808.19" y2="198.25" stroke="#666" stroke-width="1"/>
<line x1="819.73" y1="199.22" x2="810.59" y2="203.28" stroke="#666" stroke-width="1"/>
<line x1="822.06" y1="204.85" x2="812.73" y2="208.43" stroke="#666" stroke-width="1"/>
<line x1="824.10" y1="210.60" x2="814.59" y2="213.69" stroke="#666" stroke-width="1"/>
<line x1="825.83" y1="216.45" x2="816.17" y2="219.04" stroke="#666" stroke-width="2"/>
<line x1="827.25" y1="222.38" x2="817.47" y2="224.46" stroke="#666" stroke-width="1"/>
<line x1="828.37" y1="228.38" x2="818.49" y2="229.94" stroke="#666" stroke-width="1"/>
<line x1="829.16" y1="234.42" x2="819.22" y2="235.47" stroke="#666" stroke-width="1"/>
<line x1="829.64" y1="240.50" x2="819.65" y2="241.03" stroke="#666" stroke-width="1"/>
<line x1="829.80" y1="246.60" x2="819.80" y2="246.60" stroke="#666" stroke-width="2"/>
<line x1="829.64" y1="252.70" x2="819.65" y2="252.17" stroke="#666" stroke-width="1"/>
<line x1="829.16" y1="258.78" x2="819.22" y2="257.73" stroke="#666" stroke-width="1"/>
<line x1="828.37" y1="264.82" x2="818.49" y2="263.26" stroke="#666" stroke-width="1"/>
<line x1="827.25" y1="270.82" x2="817.47" y2="268.74" stroke="#666" stroke-width="1"/>
<line x1="825.83" y1="276.75" x2="816.17" y2="274.16" stroke="#666" stroke-width="2"/>
<line x1="824.10" y1="282.60" x2="814.59" y2="279.51" stroke="#666" stroke-width="1"/>
<line x1="822.06" y1="288.35" x2="812.73" y2="284.77" stroke="#666" stroke-width="1"/>
<line x1="819.73" y1="293.98" x2="810.59" y2="289.92" stroke="#666" stroke-width="1"/>
<line x1="817.10" y1="299.49" x2="808.19" y2="294.95" stroke="#666" stroke-width="1"/>
<line x1="814.19" y1="304.85" x2="805.53" y2="299.85" stroke="#666" stroke-width="2"/>
<line x1="811.01" y1="310.05" x2="802.62" y2="304.60" stroke="#666" stroke-width="1"/>
<line x1="807.55" y1="315.08" x2="799.46" y2="309.20" stroke="#666" stroke-width="1"/>
<line x1="803.84" y1="319.92" x2="796.07" y2="313.62" stroke="#666" stroke-width="1"/>
<line x1="799.88" y1="324.55" x2="792.44" y2="317.86" stroke="#666" stroke-width="1"/>
<line x1="795.68" y1="328.98" x2="788.61" y2="321.91" stroke="#666" stroke-width="2"/>
<line x1="791.25" y1="333.18" x2="784.56" y2="325.74" stroke="#666" stroke-width="1"/>
<line x1="786.62" y1="337.14" x2="780.32" y2="329.37" stroke="#666" stroke-width="1"/>
<line x1="781.78" y1="340.85" x2="775.90" y2="332.76" stroke="#666" stroke-width="1"/>
<line x1="776.75" y1="344.31" x2="771.30" y2="335.92" stroke="#666" stroke-width="1"/>
<line x1="771.55" y1="347.49" x2="766.55" y2="338.83" stroke="#666" stroke-width="2"/>
<text x="666.30" y="328.01" transform="rotate(-150.00 666.30 328.01)" text-anchor="middle" dominant-baseline="central" class="gl">0</text>
<text x="631.89" y="293.60" transform="rotate(-120.00 631.89 293.60)" text-anchor="middle" dominant-baseline="central" class="gl">20</text>
<text x="619.30" y="246.60" transform="rotate(-90.00 619.30 246.60)" text-anchor="middle" dominant-baseline="central" class="gl">40</text>
<text x="631.89" y="199.60" transform="rotate(-60.00 631.89 199.60)" text-anchor="middle" dominant-baseline="central" class="gl">60</text>
<text x="666.30" y="165.19" transform="rotate(-30.00 666.30 165.19)" text-anchor="middle" dominant-baseline="central" class="gl">80</text>
<text x="713.30" y="152.60" transform="rotate(0.00 713.30 152.60)" text-anchor="middle" dominant-baseline="central" class="gl">100</text>
<text x="760.30" y="165.19" transform="rotate(30.00 760.30 165.19)" text-anchor="middle" dominant-baseline="central" class="gl">120</text>
<text x="794.71" y="199.60" transform="rotate(60.00 794.71 199.60)" text-anchor="middle" dominant-baseline="central" class="gl">140</text>
<text x="807.30" y="246.60" transform="rotate(90.00 807.30 246.60)" text-anchor="middle" dominant-baseline="central" class="gl">160</text>
<text x="794.71" y="293.60" transform="rotate(120.00 794.71 293.60)" text-anchor="middle" dominant-baseline="central" class="gl">180</text>
<text x="760.30" y="328.01" transform="rotate(150.00 760.30 328.01)" text-anchor="middle" dominant-baseline="central" class="gl">200</text>
<text x="713.3" y="183.6" text-anchor="middle" dominant-baseline="central" class="gl">%</text>
<path d="M710.29,255.21 L725.67,165.98 L728.64,154.67 L729.62,154.84 L728.63,166.49 L713.25,255.72 Z" fill="#000"/>
<circle cx="713.3" cy="246.6" r="5.6" fill="#000"/>
<text x="713.3" y="90" text-anchor="middle" dominant-baseline="central" style="font-family:'Liberation Sans',sans-serif;font-size:16px;fill:#333;letter-spacing:0.94px">Please kind of proportion</text>
<defs><linearGradient id="lb713" x1="0" y1="0" x2="0" y2="1"><stop offset="0" stop-color="#f0f0f0"/><stop offset="1" stop-color="#e6e6e6"/></linearGradient></defs>
<rect x="686.5" y="263.5" width="55" height="29" rx="3" fill="url(#lb713)" stroke="#c8c8c8"/>
<text x="714.0" y="276.5" text-anchor="middle" dominant-baseline="central" style="font-family:'Liberation Sans',sans-serif;font-size:13px;font-weight:bold;letter-spacing:0.3px;fill:#000">106.52</text>
<defs><linearGradient id="g1152a" x1="0" y1="0" x2="0" y2="1"><stop offset="0" stop-color="#FFF"/><stop offset="1" stop-color="#333"/></linearGradient><linearGradient id="g1152b" x1="0" y1="0" x2="0" y2="1"><stop offset="0" stop-color="#333"/><stop offset="1" stop-color="#FFF"/></linearGradient><linearGradient id="g1152c" x1="0" y1="0" x2="0" y2="1"><stop offset="0" stop-color="#FFF"/><stop offset="1" stop-color="#DDD"/></linearGradient></defs>
<circle cx="1152.0" cy="246.6" r="126.99" fill="url(#g1152a)"/>
<circle cx="1152.0" cy="246.6" r="124.66" fill="url(#g1152b)" stroke="#C0C0C0" stroke-width="1"/>
<circle cx="1152.0" cy="246.6" r="122.33" fill="url(#g1152c)" stroke="#C0C0C0" stroke-width="1"/>
<circle cx="1152.0" cy="246.6" r="121.16" fill="none" stroke="#DDD" stroke-width="2.33"/>
<path d="M1093.75,347.49 A116.5,116.5 0 0 1 1210.25,145.71 L1205.25,154.37 A106.5,106.5 0 0 0 1098.75,338.83 Z" fill="#55BF3B"/>
<path d="M1210.25,145.71 A116.5,116.5 0 0 1 1268.50,246.60 L1258.50,246.60 A106.5,106.5 0 0 0 1205.25,154.37 Z" fill="#DDDF0D"/>
<path d="M1268.50,246.60 A116.5,116.5 0 0 1 1210.25,347.49 L1205.25,338.83 A106.5,106.5 0 0 0 1258.50,246.60 Z" fill="#DF5353"/>
<line x1="1093.75" y1="347.49" x2="1098.75" y2="338.83" stroke="#666" stroke-width="2"/>
<line x1="1088.55" y1="344.31" x2="1094.00" y2="335.92" stroke="#666" stroke-width="1"/>
<line x1="1083.52" y1="340.85" x2="1089.40" y2="332.76" stroke="#666" stroke-width="1"/>
<line x1="1078.68" y1="337.14" x2="1084.98" y2="329.37" stroke="#666" stroke-width="1"/>
<line x1="1074.05" y1="333.18" x2="1080.74" y2="325.74" stroke="#666" stroke-width="1"/>
<line x1="1069.62" y1="328.98" x2="1076.69" y2="321.91" stroke="#666" stroke-width="2"/>
<line x1="1065.42" y1="324.55" x2="1072.86" y2="317.86" stroke="#666" stroke-width="1"/>
<line x1="1061.46" y1="319.92" x2="1069.23" y2="313.62" stroke="#666" stroke-width="1"/>
<line x1="1057.75" y1="315.08" x2="1065.84" y2="309.20" stroke="#666" stroke-width="1"/>
<line x1="1054.29" y1="310.05" x2="1062.68" y2="304.60" stroke="#666" stroke-width="1"/>
<line x1="1051.11" y1="304.85" x2="1059.77" y2="299.85" stroke="#666" stroke-width="2"/>
<line x1="1048.20" y1="299.49" x2="1057.11" y2="294.95" stroke="#666" stroke-width="1"/>
<line x1="1045.57" y1="293.98" x2="1054.71" y2="289.92" stroke="#666" stroke-width="1"/>
<line x1="1043.24" y1="288.35" x2="1052.57" y2="284.77" stroke="#666" stroke-width="1"/>
<line x1="1041.20" y1="282.60" x2="1050.71" y2="279.51" stroke="#666" stroke-width="1"/>
<line x1="1039.47" y1="276.75" x2="1049.13" y2="274.16" stroke="#666" stroke-width="2"/>
<line x1="1038.05" y1="270.82" x2="1047.83" y2="268.74" stroke="#666" stroke-width="1"/>
<line x1="1036.93" y1="264.82" x2="1046.81" y2="263.26" stroke="#666" stroke-width="1"/>
<line x1="1036.14" y1="258.78" x2="1046.08" y2="257.73" stroke="#666" stroke-width="1"/>
<line x1="1035.66" y1="252.70" x2="1045.65" y2="252.17" stroke="#666" stroke-width="1"/>
<line x1="1035.50" y1="246.60" x2="1045.50" y2="246.60" stroke="#666" stroke-width="2"/>
<line x1="1035.66" y1="240.50" x2="1045.65" y2="241.03" stroke="#666" stroke-width="1"/>
<line x1="1036.14" y1="234.42" x2="1046.08" y2="235.47" stroke="#666" stroke-width="1"/>
<line x1="1036.93" y1="228.38" x2="1046.81" y2="229.94" stroke="#666" stroke-width="1"/>
<line x1="1038.05" y1="222.38" x2="1047.83" y2="224.46" stroke="#666" stroke-width="1"/>
<line x1="1039.47" y1="216.45" x2="1049.13" y2="219.04" stroke="#666" stroke-width="2"/>
<line x1="1041.20" y1="210.60" x2="1050.71" y2="213.69" stroke="#666" stroke-width="1"/>
<line x1="1043.24" y1="204.85" x2="1052.57" y2="208.43" stroke="#666" stroke-width="1"/>
<line x1="1045.57" y1="199.22" x2="1054.71" y2="203.28" stroke="#666" stroke-width="1"/>
<line x1="1048.20" y1="193.71" x2="1057.11" y2="198.25" stroke="#666" stroke-width="1"/>
<line x1="1051.11" y1="188.35" x2="1059.77" y2="193.35" stroke="#666" stroke-width="2"/>
<line x1="1054.29" y1="183.15" x2="1062.68" y2="188.60" stroke="#666" stroke-width="1"/>
<line x1="1057.75" y1="178.12" x2="1065.84" y2="184.00" stroke="#666" stroke-width="1"/>
<line x1="1061.46" y1="173.28" x2="1069.23" y2="179.58" stroke="#666" stroke-width="1"/>
<line x1="1065.42" y1="168.65" x2="1072.86" y2="175.34" stroke="#666" stroke-width="1"/>
<line x1="1069.62" y1="164.22" x2="1076.69" y2="171.29" stroke="#666" stroke-width="2"/>
<line x1="1074.05" y1="160.02" x2="1080.74" y2="167.46" stroke="#666" stroke-width="1"/>
<line x1="1078.68" y1="156.06" x2="1084.98" y2="163.83" stroke="#666" stroke-width="1"/>
<line x1="1083.52" y1="152.35" x2="1089.40" y2="160.44" stroke="#666" stroke-width="1"/>
<line x1="1088.55" y1="148.89" x2="1094.00" y2="157.28" stroke="#666" stroke-width="1"/>
<line x1="1093.75" y1="145.71" x2="1098.75" y2="154.37" stroke="#666" stroke-width="2"/>
<line x1="1099.11" y1="142.80" x2="1103.65" y2="151.71" stroke="#666" stroke-width="1"/>
<line x1="1104.62" y1="140.17" x2="1108.68" y2="149.31" stroke="#666" stroke-width="1"/>
<line x1="1110.25" y1="137.84" x2="1113.83" y2="147.17" stroke="#666" stroke-width="1"/>
<line x1="1116.00" y1="135.80" x2="1119.09" y2="145.31" stroke="#666" stroke-width="1"/>
<line x1="1121.85" y1="134.07" x2="1124.44" y2="143.73" stroke="#666" stroke-width="2"/>
<line x1="1127.78" y1="132.65" x2="1129.86" y2="142.43" stroke="#666" stroke-width="1"/>
<line x1="1133.78" y1="131.53" x2="1135.34" y2="141.41" stroke="#666" stroke-width="1"/>
<line x1="1139.82" y1="130.74" x2="1140.87" y2="140.68" stroke="#666" stroke-width="1"/>
<line x1="1145.90" y1="130.26" x2="1146.43" y2="140.25" stroke="#666" stroke-width="1"/>
<line x1="1152.00" y1="130.10" x2="1152.00" y2="140.10" stroke="#666" stroke-width="2"/>
<line x1="1158.10" y1="130.26" x2="1157.57" y2="140.25" stroke="#666" stroke-width="1"/>
<line x1="1164.18" y1="130.74" x2="1163.13" y2="140.68" stroke="#666" stroke-width="1"/>
<line x1="1170.22" y1="131.53" x2="1168.66" y2="141.41" stroke="#666" stroke-width="1"/>
<line x1="1176.22" y1="132.65" x2="1174.14" y2="142.43" stroke="#666" stroke-width="1"/>
<line x1="1182.15" y1="134.07" x2="1179.56" y2="143.73" stroke="#666" stroke-width="2"/>
<line x1="1188.00" y1="135.80" x2="1184.91" y2="145.31" stroke="#666" stroke-width="1"/>
<line x1="1193.75" y1="137.84" x2="1190.17" y2="147.17" stroke="#666" stroke-width="1"/>
<line x1="1199.38" y1="140.17" x2="1195.32" y2="149.31" stroke="#666" stroke-width="1"/>
<line x1="1204.89" y1="142.80" x2="1200.35" y2="151.71" stroke="#666" stroke-width="1"/>
<line x1="1210.25" y1="145.71" x2="1205.25" y2="154.37" stroke="#666" stroke-width="2"/>
<line x1="1215.45" y1="148.89" x2="1210.00" y2="157.28" stroke="#666" stroke-width="1"/>
<line x1="1220.48" y1="152.35" x2="1214.60" y2="160.44" stroke="#666" stroke-width="1"/>
<line x1="1225.32" y1="156.06" x2="1219.02" y2="163.83" stroke="#666" stroke-width="1"/>
<line x1="1229.95" y1="160.02" x2="1223.26" y2="167.46" stroke="#666" stroke-width="1"/>
<line x1="1234.38" y1="164.22" x2="1227.31" y2="171.29" stroke="#666" stroke-width="2"/>
<line x1="1238.58" y1="168.65" x2="1231.14" y2="175.34" stroke="#666" stroke-width="1"/>
<line x1="1242.54" y1="173.28" x2="1234.77" y2="179.58" stroke="#666" stroke-width="1"/>
<line x1="1246.25" y1="178.12" x2="1238.16" y2="184.00" stroke="#666" stroke-width="1"/>
<line x1="1249.71" y1="183.15" x2="1241.32" y2="188.60" stroke="#666" stroke-width="1"/>
<line x1="1252.89" y1="188.35" x2="1244.23" y2="193.35" stroke="#666" stroke-width="2"/>
<line x1="1255.80" y1="193.71" x2="1246.89" y2="198.25" stroke="#666" stroke-width="1"/>
<line x1="1258.43" y1="199.22" x2="1249.29" y2="203.28" stroke="#666" stroke-width="1"/>
<line x1="1260.76" y1="204.85" x2="1251.43" y2="208.43" stroke="#666" stroke-width="1"/>
<line x1="1262.80" y1="210.60" x2="1253.29" y2="213.69" stroke="#666" stroke-width="1"/>
<line x1="1264.53" y1="216.45" x2="1254.87" y2="219.04" stroke="#666" stroke-width="2"/>
<line x1="1265.95" y1="222.38" x2="1256.17" y2="224.46" stroke="#666" stroke-width="1"/>
<line x1="1267.07" y1="228.38" x2="1257.19" y2="229.94" stroke="#666" stroke-width="1"/>
<line x1="1267.86" y1="234.42" x2="1257.92" y2="235.47" stroke="#666" stroke-width="1"/>
<line x1="1268.34" y1="240.50" x2="1258.35" y2="241.03" stroke="#666" stroke-width="1"/>
<line x1="1268.50" y1="246.60" x2="1258.50" y2="246.60" stroke="#666" stroke-width="2"/>
<line x1="1268.34" y1="252.70" x2="1258.35" y2="252.17" stroke="#666" stroke-width="1"/>
<line x1="1267.86" y1="258.78" x2="1257.92" y2="257.73" stroke="#666" stroke-width="1"/>
<line x1="1267.07" y1="264.82" x2="1257.19" y2="263.26" stroke="#666" stroke-width="1"/>
<line x1="1265.95" y1="270.82" x2="1256.17" y2="268.74" stroke="#666" stroke-width="1"/>
<line x1="1264.53" y1="276.75" x2="1254.87" y2="274.16" stroke="#666" stroke-width="2"/>
<line x1="1262.80" y1="282.60" x2="1253.29" y2="279.51" stroke="#666" stroke-width="1"/>
<line x1="1260.76" y1="288.35" x2="1251.43" y2="284.77" stroke="#666" stroke-width="1"/>
<line x1="1258.43" y1="293.98" x2="1249.29" y2="289.92" stroke="#666" stroke-width="1"/>
<line x1="1255.80" y1="299.49" x2="1246.89" y2="294.95" stroke="#666" stroke-width="1"/>
<line x1="1252.89" y1="304.85" x2="1244.23" y2="299.85" stroke="#666" stroke-width="2"/>
<line x1="1249.71" y1="310.05" x2="1241.32" y2="304.60" stroke="#666" stroke-width="1"/>
<line x1="1246.25" y1="315.08" x2="1238.16" y2="309.20" stroke="#666" stroke-width="1"/>
<line x1="1242.54" y1="319.92" x2="1234.77" y2="313.62" stroke="#666" stroke-width="1"/>
<line x1="1238.58" y1="324.55" x2="1231.14" y2="317.86" stroke="#666" stroke-width="1"/>
<line x1="1234.38" y1="328.98" x2="1227.31" y2="321.91" stroke="#666" stroke-width="2"/>
<line x1="1229.95" y1="333.18" x2="1223.26" y2="325.74" stroke="#666" stroke-width="1"/>
<line x1="1225.32" y1="337.14" x2="1219.02" y2="329.37" stroke="#666" stroke-width="1"/>
<line x1="1220.48" y1="340.85" x2="1214.60" y2="332.76" stroke="#666" stroke-width="1"/>
<line x1="1215.45" y1="344.31" x2="1210.00" y2="335.92" stroke="#666" stroke-width="1"/>
<line x1="1210.25" y1="347.49" x2="1205.25" y2="338.83" stroke="#666" stroke-width="2"/>
<text x="1105.00" y="328.01" transform="rotate(-150.00 1105.00 328.01)" text-anchor="middle" dominant-baseline="central" class="gl">0</text>
<text x="1070.59" y="293.60" transform="rotate(-120.00 1070.59 293.60)" text-anchor="middle" dominant-baseline="central" class="gl">20</text>
<text x="1058.00" y="246.60" transform="rotate(-90.00 1058.00 246.60)" text-anchor="middle" dominant-baseline="central" class="gl">40</text>
<text x="1070.59" y="199.60" transform="rotate(-60.00 1070.59 199.60)" text-anchor="middle" dominant-baseline="central" class="gl">60</text>
<text x="1105.00" y="165.19" transform="rotate(-30.00 1105.00 165.19)" text-anchor="middle" dominant-baseline="central" class="gl">80</text>
<text x="1152.00" y="152.60" transform="rotate(0.00 1152.00 152.60)" text-anchor="middle" dominant-baseline="central" class="gl">100</text>
<text x="1199.00" y="165.19" transform="rotate(30.00 1199.00 165.19)" text-anchor="middle" dominant-baseline="central" class="gl">120</text>
<text x="1233.41" y="199.60" transform="rotate(60.00 1233.41 199.60)" text-anchor="middle" dominant-baseline="central" class="gl">140</text>
<text x="1246.00" y="246.60" transform="rotate(90.00 1246.00 246.60)" text-anchor="middle" dominant-baseline="central" class="gl">160</text>
<text x="1233.41" y="293.60" transform="rotate(120.00 1233.41 293.60)" text-anchor="middle" dominant-baseline="central" class="gl">180</text>
<text x="1199.00" y="328.01" transform="rotate(150.00 1199.00 328.01)" text-anchor="middle" dominant-baseline="central" class="gl">200</text>
<text x="1152.0" y="183.6" text-anchor="middle" dominant-baseline="central" class="gl">%</text>
<path d="M1159.00,252.45 L1080.94,206.56 L1071.40,199.80 L1071.91,198.94 L1082.46,203.98 L1160.52,249.87 Z" fill="#000"/>
<circle cx="1152.0" cy="246.6" r="5.6" fill="#000"/>
<text x="1152.0" y="90" text-anchor="middle" dominant-baseline="central" style="font-family:'Liberation Sans',sans-serif;font-size:16px;fill:#333;letter-spacing:0.94px">Payment proportion</text>
<defs><linearGradient id="lb1152" x1="0" y1="0" x2="0" y2="1"><stop offset="0" stop-color="#f0f0f0"/><stop offset="1" stop-color="#e6e6e6"/></linearGradient></defs>
<rect x="1132.5" y="263.5" width="39" height="29" rx="3" fill="url(#lb1152)" stroke="#c8c8c8"/>
<text x="1152.0" y="276.5" text-anchor="middle" dominant-baseline="central" style="font-family:'Liberation Sans',sans-serif;font-size:13px;font-weight:bold;letter-spacing:0.3px;fill:#000">60.3</text>
<defs><linearGradient id="g1590a" x1="0" y1="0" x2="0" y2="1"><stop offset="0" stop-color="#FFF"/><stop offset="1" stop-color="#333"/></linearGradient><linearGradient id="g1590b" x1="0" y1="0" x2="0" y2="1"><stop offset="0" stop-color="#333"/><stop offset="1" stop-color="#FFF"/></linearGradient><linearGradient id="g1590c" x1="0" y1="0" x2="0" y2="1"><stop offset="0" stop-color="#FFF"/><stop offset="1" stop-color="#DDD"/></linearGradient></defs>
<circle cx="1590.5" cy="246.6" r="126.99" fill="url(#g1590a)"/>
<circle cx="1590.5" cy="246.6" r="124.66" fill="url(#g1590b)" stroke="#C0C0C0" stroke-width="1"/>
<circle cx="1590.5" cy="246.6" r="122.33" fill="url(#g1590c)" stroke="#C0C0C0" stroke-width="1"/>
<circle cx="1590.5" cy="246.6" r="121.16" fill="none" stroke="#DDD" stroke-width="2.33"/>
<path d="M1532.25,347.49 A116.5,116.5 0 0 1 1648.75,145.71 L1643.75,154.37 A106.5,106.5 0 0 0 1537.25,338.83 Z" fill="#55BF3B"/>
<path d="M1648.75,145.71 A116.5,116.5 0 0 1 1707.00,246.60 L1697.00,246.60 A106.5,106.5 0 0 0 1643.75,154.37 Z" fill="#DDDF0D"/>
<path d="M1707.00,246.60 A116.5,116.5 0 0 1 1648.75,347.49 L1643.75,338.83 A106.5,106.5 0 0 0 1697.00,246.60 Z" fill="#DF5353"/>
<line x1="1532.25" y1="347.49" x2="1537.25" y2="338.83" stroke="#666" stroke-width="2"/>
<line x1="1527.05" y1="344.31" x2="1532.50" y2="335.92" stroke="#666" stroke-width="1"/>
<line x1="1522.02" y1="340.85" x2="1527.90" y2="332.76" stroke="#666" stroke-width="1"/>
<line x1="1517.18" y1="337.14" x2="1523.48" y2="329.37" stroke="#666" stroke-width="1"/>
<line x1="1512.55" y1="333.18" x2="1519.24" y2="325.74" stroke="#666" stroke-width="1"/>
<line x1="1508.12" y1="328.98" x2="1515.19" y2="321.91" stroke="#666" stroke-width="2"/>
<line x1="1503.92" y1="324.55" x2="1511.36" y2="317.86" stroke="#666" stroke-width="1"/>
<line x1="1499.96" y1="319.92" x2="1507.73" y2="313.62" stroke="#666" stroke-width="1"/>
<line x1="1496.25" y1="315.08" x2="1504.34" y2="309.20" stroke="#666" stroke-width="1"/>
<line x1="1492.79" y1="310.05" x2="1501.18" y2="304.60" stroke="#666" stroke-width="1"/>
<line x1="1489.61" y1="304.85" x2="1498.27" y2="299.85" stroke="#666" stroke-width="2"/>
<line x1="1486.70" y1="299.49" x2="1495.61" y2="294.95" stroke="#666" stroke-width="1"/>
<line x1="1484.07" y1="293.98" x2="1493.21" y2="289.92" stroke="#666" stroke-width="1"/>
<line x1="1481.74" y1="288.35" x2="1491.07" y2="284.77" stroke="#666" stroke-width="1"/>
<line x1="1479.70" y1="282.60" x2="1489.21" y2="279.51" stroke="#666" stroke-width="1"/>
<line x1="1477.97" y1="276.75" x2="1487.63" y2="274.16" stroke="#666" stroke-width="2"/>
<line x1="1476.55" y1="270.82" x2="1486.33" y2="268.74" stroke="#666" stroke-width="1"/>
<line x1="1475.43" y1="264.82" x2="1485.31" y2="263.26" stroke="#666" stroke-width="1"/>
<line x1="1474.64" y1="258.78" x2="1484.58" y2="257.73" stroke="#666" stroke-width="1"/>
<line x1="1474.16" y1="252.70" x2="1484.15" y2="252.17" stroke="#666" stroke-width="1"/>
<line x1="1474.00" y1="246.60" x2="1484.00" y2="246.60" stroke="#666" stroke-width="2"/>
<line x1="1474.16" y1="240.50" x2="1484.15" y2="241.03" stroke="#666" stroke-width="1"/>
<line x1="1474.64" y1="234.42" x2="1484.58" y2="235.47" stroke="#666" stroke-width="1"/>
<line x1="1475.43" y1="228.38" x2="1485.31" y2="229.94" stroke="#666" stroke-width="1"/>
<line x1="1476.55" y1="222.38" x2="1486.33" y2="224.46" stroke="#666" stroke-width="1"/>
<line x1="1477.97" y1="216.45" x2="1487.63" y2="219.04" stroke="#666" stroke-width="2"/>
<line x1="1479.70" y1="210.60" x2="1489.21" y2="213.69" stroke="#666" stroke-width="1"/>
<line x1="1481.74" y1="204.85" x2="1491.07" y2="208.43" stroke="#666" stroke-width="1"/>
<line x1="1484.07" y1="199.22" x2="1493.21" y2="203.28" stroke="#666" stroke-width="1"/>
<line x1="1486.70" y1="193.71" x2="1495.61" y2="198.25" stroke="#666" stroke-width="1"/>
<line x1="1489.61" y1="188.35" x2="1498.27" y2="193.35" stroke="#666" stroke-width="2"/>
<line x1="1492.79" y1="183.15" x2="1501.18" y2="188.60" stroke="#666" stroke-width="1"/>
<line x1="1496.25" y1="178.12" x2="1504.34" y2="184.00" stroke="#666" stroke-width="1"/>
<line x1="1499.96" y1="173.28" x2="1507.73" y2="179.58" stroke="#666" stroke-width="1"/>
<line x1="1503.92" y1="168.65" x2="1511.36" y2="175.34" stroke="#666" stroke-width="1"/>
<line x1="1508.12" y1="164.22" x2="1515.19" y2="171.29" stroke="#666" stroke-width="2"/>
<line x1="1512.55" y1="160.02" x2="1519.24" y2="167.46" stroke="#666" stroke-width="1"/>
<line x1="1517.18" y1="156.06" x2="1523.48" y2="163.83" stroke="#666" stroke-width="1"/>
<line x1="1522.02" y1="152.35" x2="1527.90" y2="160.44" stroke="#666" stroke-width="1"/>
<line x1="1527.05" y1="148.89" x2="1532.50" y2="157.28" stroke="#666" stroke-width="1"/>
<line x1="1532.25" y1="145.71" x2="1537.25" y2="154.37" stroke="#666" stroke-width="2"/>
<line x1="1537.61" y1="142.80" x2="1542.15" y2="151.71" stroke="#666" stroke-width="1"/>
<line x1="1543.12" y1="140.17" x2="1547.18" y2="149.31" stroke="#666" stroke-width="1"/>
<line x1="1548.75" y1="137.84" x2="1552.33" y2="147.17" stroke="#666" stroke-width="1"/>
<line x1="1554.50" y1="135.80" x2="1557.59" y2="145.31" stroke="#666" stroke-width="1"/>
<line x1="1560.35" y1="134.07" x2="1562.94" y2="143.73" stroke="#666" stroke-width="2"/>
<line x1="1566.28" y1="132.65" x2="1568.36" y2="142.43" stroke="#666" stroke-width="1"/>
<line x1="1572.28" y1="131.53" x2="1573.84" y2="141.41" stroke="#666" stroke-width="1"/>
<line x1="1578.32" y1="130.74" x2="1579.37" y2="140.68" stroke="#666" stroke-width="1"/>
<line x1="1584.40" y1="130.26" x2="1584.93" y2="140.25" stroke="#666" stroke-width="1"/>
<line x1="1590.50" y1="130.10" x2="1590.50" y2="140.10" stroke="#666" stroke-width="2"/>
<line x1="1596.60" y1="130.26" x2="1596.07" y2="140.25" stroke="#666" stroke-width="1"/>
<line x1="1602.68" y1="130.74" x2="1601.63" y2="140.68" stroke="#666" stroke-width="1"/>
<line x1="1608.72" y1="131.53" x2="1607.16" y2="141.41" stroke="#666" stroke-width="1"/>
<line x1="1614.72" y1="132.65" x2="1612.64" y2="142.43" stroke="#666" stroke-width="1"/>
<line x1="1620.65" y1="134.07" x2="1618.06" y2="143.73" stroke="#666" stroke-width="2"/>
<line x1="1626.50" y1="135.80" x2="1623.41" y2="145.31" stroke="#666" stroke-width="1"/>
<line x1="1632.25" y1="137.84" x2="1628.67" y2="147.17" stroke="#666" stroke-width="1"/>
<line x1="1637.88" y1="140.17" x2="1633.82" y2="149.31" stroke="#666" stroke-width="1"/>
<line x1="1643.39" y1="142.80" x2="1638.85" y2="151.71" stroke="#666" stroke-width="1"/>
<line x1="1648.75" y1="145.71" x2="1643.75" y2="154.37" stroke="#666" stroke-width="2"/>
<line x1="1653.95" y1="148.89" x2="1648.50" y2="157.28" stroke="#666" stroke-width="1"/>
<line x1="1658.98" y1="152.35" x2="1653.10" y2="160.44" stroke="#666" stroke-width="1"/>
<line x1="1663.82" y1="156.06" x2="1657.52" y2="163.83" stroke="#666" stroke-width="1"/>
<line x1="1668.45" y1="160.02" x2="1661.76" y2="167.46" stroke="#666" stroke-width="1"/>
<line x1="1672.88" y1="164.22" x2="1665.81" y2="171.29" stroke="#666" stroke-width="2"/>
<line x1="1677.08" y1="168.65" x2="1669.64" y2="175.34" stroke="#666" stroke-width="1"/>
<line x1="1681.04" y1="173.28" x2="1673.27" y2="179.58" stroke="#666" stroke-width="1"/>
<line x1="1684.75" y1="178.12" x2="1676.66" y2="184.00" stroke="#666" stroke-width="1"/>
<line x1="1688.21" y1="183.15" x2="1679.82" y2="188.60" stroke="#666" stroke-width="1"/>
<line x1="1691.39" y1="188.35" x2="1682.73" y2="193.35" stroke="#666" stroke-width="2"/>
<line x1="1694.30" y1="193.71" x2="1685.39" y2="198.25" stroke="#666" stroke-width="1"/>
<line x1="1696.93" y1="199.22" x2="1687.79" y2="203.28" stroke="#666" stroke-width="1"/>
<line x1="1699.26" y1="204.85" x2="1689.93" y2="208.43" stroke="#666" stroke-width="1"/>
<line x1="1701.30" y1="210.60" x2="1691.79" y2="213.69" stroke="#666" stroke-width="1"/>
<line x1="1703.03" y1="216.45" x2="1693.37" y2="219.04" stroke="#666" stroke-width="2"/>
<line x1="1704.45" y1="222.38" x2="1694.67" y2="224.46" stroke="#666" stroke-width="1"/>
<line x1="1705.57" y1="228.38" x2="1695.69" y2="229.94" stroke="#666" stroke-width="1"/>
<line x1="1706.36" y1="234.42" x2="1696.42" y2="235.47" stroke="#666" stroke-width="1"/>
<line x1="1706.84" y1="240.50" x2="1696.85" y2="241.03" stroke="#666" stroke-width="1"/>
<line x1="1707.00" y1="246.60" x2="1697.00" y2="246.60" stroke="#666" stroke-width="2"/>
<line x1="1706.84" y1="252.70" x2="1696.85" y2="252.17" stroke="#666" stroke-width="1"/>
<line x1="1706.36" y1="258.78" x2="1696.42" y2="257.73" stroke="#666" stroke-width="1"/>
<line x1="1705.57" y1="264.82" x2="1695.69" y2="263.26" stroke="#666" stroke-width="1"/>
<line x1="1704.45" y1="270.82" x2="1694.67" y2="268.74" stroke="#666" stroke-width="1"/>
<line x1="1703.03" y1="276.75" x2="1693.37" y2="274.16" stroke="#666" stroke-width="2"/>
<line x1="1701.30" y1="282.60" x2="1691.79" y2="279.51" stroke="#666" stroke-width="1"/>
<line x1="1699.26" y1="288.35" x2="1689.93" y2="284.77" stroke="#666" stroke-width="1"/>
<line x1="1696.93" y1="293.98" x2="1687.79" y2="289.92" stroke="#666" stroke-width="1"/>
<line x1="1694.30" y1="299.49" x2="1685.39" y2="294.95" stroke="#666" stroke-width="1"/>
<line x1="1691.39" y1="304.85" x2="1682.73" y2="299.85" stroke="#666" stroke-width="2"/>
<line x1="1688.21" y1="310.05" x2="1679.82" y2="304.60" stroke="#666" stroke-width="1"/>
<line x1="1684.75" y1="315.08" x2="1676.66" y2="309.20" stroke="#666" stroke-width="1"/>
<line x1="1681.04" y1="319.92" x2="1673.27" y2="313.62" stroke="#666" stroke-width="1"/>
<line x1="1677.08" y1="324.55" x2="1669.64" y2="317.86" stroke="#666" stroke-width="1"/>
<line x1="1672.88" y1="328.98" x2="1665.81" y2="321.91" stroke="#666" stroke-width="2"/>
<line x1="1668.45" y1="333.18" x2="1661.76" y2="325.74" stroke="#666" stroke-width="1"/>
<line x1="1663.82" y1="337.14" x2="1657.52" y2="329.37" stroke="#666" stroke-width="1"/>
<line x1="1658.98" y1="340.85" x2="1653.10" y2="332.76" stroke="#666" stroke-width="1"/>
<line x1="1653.95" y1="344.31" x2="1648.50" y2="335.92" stroke="#666" stroke-width="1"/>
<line x1="1648.75" y1="347.49" x2="1643.75" y2="338.83" stroke="#666" stroke-width="2"/>
<text x="1543.50" y="328.01" transform="rotate(-150.00 1543.50 328.01)" text-anchor="middle" dominant-baseline="central" class="gl">0</text>
<text x="1509.09" y="293.60" transform="rotate(-120.00 1509.09 293.60)" text-anchor="middle" dominant-baseline="central" class="gl">20</text>
<text x="1496.50" y="246.60" transform="rotate(-90.00 1496.50 246.60)" text-anchor="middle" dominant-baseline="central" class="gl">40</text>
<text x="1509.09" y="199.60" transform="rotate(-60.00 1509.09 199.60)" text-anchor="middle" dominant-baseline="central" class="gl">60</text>
<text x="1543.50" y="165.19" transform="rotate(-30.00 1543.50 165.19)" text-anchor="middle" dominant-baseline="central" class="gl">80</text>
<text x="1590.50" y="152.60" transform="rotate(0.00 1590.50 152.60)" text-anchor="middle" dominant-baseline="central" class="gl">100</text>
<text x="1637.50" y="165.19" transform="rotate(30.00 1637.50 165.19)" text-anchor="middle" dominant-baseline="central" class="gl">120</text>
<text x="1671.91" y="199.60" transform="rotate(60.00 1671.91 199.60)" text-anchor="middle" dominant-baseline="central" class="gl">140</text>
<text x="1684.50" y="246.60" transform="rotate(90.00 1684.50 246.60)" text-anchor="middle" dominant-baseline="central" class="gl">160</text>
<text x="1671.91" y="293.60" transform="rotate(120.00 1671.91 293.60)" text-anchor="middle" dominant-baseline="central" class="gl">180</text>
<text x="1637.50" y="328.01" transform="rotate(150.00 1637.50 328.01)" text-anchor="middle" dominant-baseline="central" class="gl">200</text>
<text x="1590.5" y="183.6" text-anchor="middle" dominant-baseline="central" class="gl">%</text>
<path d="M1599.33,248.89 L1509.14,240.87 L1497.62,238.84 L1497.71,237.84 L1509.40,237.88 L1599.60,245.90 Z" fill="#000"/>
<circle cx="1590.5" cy="246.6" r="5.6" fill="#000"/>
<text x="1590.5" y="90" text-anchor="middle" dominant-baseline="central" style="font-family:'Liberation Sans',sans-serif;font-size:16px;fill:#333;letter-spacing:0.94px">Owing to the proportion</text>
<defs><linearGradient id="lb1590" x1="0" y1="0" x2="0" y2="1"><stop offset="0" stop-color="#f0f0f0"/><stop offset="1" stop-color="#e6e6e6"/></linearGradient></defs>
<rect x="1568.5" y="263.5" width="46" height="29" rx="3" fill="url(#lb1590)" stroke="#c8c8c8"/>
<text x="1591.5" y="276.5" text-anchor="middle" dominant-baseline="central" style="font-family:'Liberation Sans',sans-serif;font-size:13px;font-weight:bold;letter-spacing:0.3px;fill:#000">43.39</text>
</svg>
<div class="a sb" style="left:493px;top:404px;width:1251px;height:16px"></div>
<div class="a th" style="left:510px;top:404px;width:1148px;height:15px"></div>
<svg class="a" style="left:497px;top:408px" width="8" height="7"><path d="M7 0h-2.8l-4 3.5 4 3.5h2.8l-4-3.5z" fill="#575757"/></svg>
<svg class="a" style="left:1736px;top:408px" width="8" height="7"><path d="M0 0h2.8l4 3.5-4 3.5h-2.8l4-3.5z" fill="#575757"/></svg>
<div class="a" style="left:493px;top:420px;width:1251px;height:63px;border-top:1px solid #dddddd;border-bottom:1px solid #dddddd;background:linear-gradient(#f9f9f9 0,#f8f8f8 55%,#f4f4f4 57%,#f3f3f3 74%,#ededed 77%,#ebebeb 100%)"></div>
<div class="a" style="left:538px;top:421px;width:1px;height:61px;background:#dcdcdc"></div>
<div class="a" style="left:635px;top:421px;width:1px;height:61px;background:#dcdcdc"></div>
<div class="a" style="left:770px;top:421px;width:1px;height:61px;background:#dcdcdc"></div>
<div class="a" style="left:924px;top:421px;width:1px;height:61px;background:#dcdcdc"></div>
<div class="a" style="left:1063px;top:421px;width:1px;height:61px;background:#dcdcdc"></div>
<div class="a" style="left:1276px;top:421px;width:1px;height:61px;background:#dcdcdc"></div>
<div class="a" style="left:1386px;top:421px;width:1px;height:61px;background:#dcdcdc"></div>
<div class="a" style="left:1475px;top:421px;width:1px;height:61px;background:#dcdcdc"></div>
<div class="a" style="left:1563px;top:421px;width:1px;height:61px;background:#dcdcdc"></div>
<div class="a" style="left:770px;top:451px;width:616px;height:1px;background:#dcdcdc"></div>
<div class="a" style="left:539px;top:421px;width:96px;height:61px;overflow:hidden">
<div class="a" style="left:0px;top:29.899999999999977px;font-family:'Liberation Mono',monospace;font-size:13px;letter-spacing:-0.8px;color:#000;white-space:nowrap;line-height:14px">act name</div>
</div>
<div class="a" style="left:643.5px;top:450.9px;width:121px;font-family:'Liberation Mono',monospace;font-size:13px;letter-spacing:-0.8px;color:#000;white-space:nowrap;line-height:14px;">Contracted amount</div>
<div class="a" style="left:777.5px;top:427.9px;width:142px;font-family:'Liberation Mono',monospace;font-size:13px;letter-spacing:-0.8px;color:#000;white-space:nowrap;line-height:14px;">Total payout request</div>
<div class="a" style="left:844.0px;top:460.4px;width:9px;font-family:'Liberation Mono',monospace;font-size:13px;letter-spacing:-0.8px;color:#000;white-space:nowrap;line-height:14px;">A</div>
<div class="a" style="left:934.5px;top:427.9px;width:121px;font-family:'Liberation Mono',monospace;font-size:13px;letter-spacing:-0.8px;color:#000;white-space:nowrap;line-height:14px;">Total paid amount</div>
<div class="a" style="left:990.5px;top:460.4px;width:9px;font-family:'Liberation Mono',monospace;font-size:13px;letter-spacing:-0.8px;color:#000;white-space:nowrap;line-height:14px;">B</div>
<div class="a" style="left:1075.5px;top:427.9px;width:191px;font-family:'Liberation Mono',monospace;font-size:13px;letter-spacing:-0.8px;color:#000;white-space:nowrap;line-height:14px;">Accumulated delayed payment</div>
<div class="a" style="left:1152.5px;top:460.4px;width:37px;font-family:'Liberation Mono',monospace;font-size:13px;letter-spacing:-0.8px;color:#000;white-space:nowrap;line-height:14px;">C=A-B</div>
<div class="a" style="left:1286.0px;top:427.9px;width:93px;font-family:'Liberation Mono',monospace;font-size:13px;letter-spacing:-0.8px;color:#000;white-space:nowrap;line-height:14px;">Proportion of</div>
<div class="a nn" style="left:1296.5px;top:459.1px"><span class="nm">D</span><span class="nm">=</span><span class="nm">C</span><span class="nm">/</span><span class="nm">A</span><span class="nm">*</span><span class="nd">1</span><span class="nd">0</span><span class="nd">0</span><span class="nm">%</span></div>
<div class="a" style="left:1406.5px;top:450.9px;width:51px;font-family:'Liberation Mono',monospace;font-size:13px;letter-spacing:-0.8px;color:#000;white-space:nowrap;line-height:14px;">Party A</div>
<div class="a" style="left:1495.0px;top:450.9px;width:51px;font-family:'Liberation Mono',monospace;font-size:13px;letter-spacing:-0.8px;color:#000;white-space:nowrap;line-height:14px;">Party B</div>
<div class="a" style="left:1614.0px;top:450.9px;width:121px;font-family:'Liberation Mono',monospace;font-size:13px;letter-spacing:-0.8px;color:#000;white-space:nowrap;line-height:14px;">Date of signature</div>
<div class="a" style="left:536px;top:483px;width:1208px;height:26px;background:#ffffff"></div>
<div class="a" style="left:493px;top:483px;width:43px;height:26px;background:#f0f0f0"></div>
<div class="a" style="left:493px;top:509px;width:1251px;height:1px;background:#dddddd"></div>
<div class="a" style="left:536px;top:510px;width:1208px;height:26px;background:#f4f4f4"></div>
<div class="a" style="left:493px;top:510px;width:43px;height:26px;background:#f0f0f0"></div>
<div class="a" style="left:493px;top:536px;width:1251px;height:1px;background:#dddddd"></div>
<div class="a" style="left:536px;top:537px;width:1208px;height:27px;background:#ffffff"></div>
<div class="a" style="left:493px;top:537px;width:43px;height:27px;background:#f0f0f0"></div>
<div class="a" style="left:536px;top:564px;width:1208px;height:27px;background:#f4f4f4"></div>
<div class="a" style="left:493px;top:564px;width:43px;height:27px;background:#f0f0f0"></div>
<div class="a" style="left:493px;top:591px;width:1251px;height:1px;background:#dddddd"></div>
<div class="a" style="left:536px;top:592px;width:1208px;height:26px;background:#ffffff"></div>
<div class="a" style="left:493px;top:592px;width:43px;height:26px;background:#f0f0f0"></div>
<div class="a" style="left:493px;top:618px;width:1251px;height:1px;background:#dddddd"></div>
<div class="a" style="left:536px;top:619px;width:1208px;height:26px;background:#f4f4f4"></div>
<div class="a" style="left:493px;top:619px;width:43px;height:26px;background:#f0f0f0"></div>
<div class="a" style="left:493px;top:645px;width:1251px;height:1px;background:#dddddd"></div>
<div class="a" style="left:536px;top:646px;width:1208px;height:25px;background:#ffffff"></div>
<div class="a" style="left:493px;top:671px;width:1251px;height:1px;background:#dddddd"></div>
<div class="a nn" style="left:511.0px;top:487.5px"><span class="nd">1</span></div>
<div class="a nn" style="left:680.2px;top:487.4px"><span class="nd">1</span><span class="nd">5</span><span class="nd">0</span><span class="nd">0</span><span class="nd">0</span><span class="nd">0</span><span class="nd">0</span><span class="nd">0</span><span class="np">.</span><span class="nd">0</span><span class="nd">0</span><span class="nd">0</span></div>
<div class="a nn" style="left:833.2px;top:487.4px"><span class="nd">1</span><span class="nd">3</span><span class="nd">5</span><span class="nd">0</span><span class="nd">0</span><span class="nd">0</span><span class="nd">0</span><span class="nd">0</span><span class="np">.</span><span class="nd">0</span><span class="nd">0</span><span class="nd">0</span></div>
<div class="a nn" style="left:972.2px;top:487.4px"><span class="nd">1</span><span class="nd">3</span><span class="nd">5</span><span class="nd">0</span><span class="nd">0</span><span class="nd">0</span><span class="nd">0</span><span class="nd">0</span><span class="np">.</span><span class="nd">0</span><span class="nd">0</span><span class="nd">0</span></div>
<div class="a nn" style="left:1234.2px;top:487.4px"><span class="nd">0</span><span class="np">.</span><span class="nd">0</span><span class="nd">0</span><span class="nd">0</span></div>
<div class="a nn" style="left:1345.2px;top:487.4px"><span class="nd">0</span><span class="np">.</span><span class="nd">0</span><span class="nd">0</span><span class="nm">%</span></div>
<div class="a nn" style="left:1636.7px;top:487.5px"><span class="nd">2</span><span class="nd">0</span><span class="nd">1</span><span class="nd">8</span><span class="nm">&#8211;</span><span class="nd">0</span><span class="nd">9</span><span class="nm">&#8211;</span><span class="nd">1</span><span class="nd">0</span></div>
<div class="a nn" style="left:511.0px;top:514.6px"><span class="nd">2</span></div>
<div class="a nn" style="left:680.2px;top:514.5px"><span class="nd">2</span><span class="nd">0</span><span class="nd">0</span><span class="nd">0</span><span class="nd">0</span><span class="nd">0</span><span class="nd">0</span><span class="nd">0</span><span class="np">.</span><span class="nd">0</span><span class="nd">0</span><span class="nd">0</span></div>
<div class="a nn" style="left:833.2px;top:514.5px"><span class="nd">2</span><span class="nd">6</span><span class="nd">0</span><span class="nd">0</span><span class="nd">0</span><span class="nd">0</span><span class="nd">0</span><span class="nd">0</span><span class="np">.</span><span class="nd">0</span><span class="nd">0</span><span class="nd">0</span></div>
<div class="a nn" style="left:972.2px;top:514.5px"><span class="nd">2</span><span class="nd">6</span><span class="nd">0</span><span class="nd">0</span><span class="nd">0</span><span class="nd">0</span><span class="nd">0</span><span class="nd">0</span><span class="np">.</span><span class="nd">0</span><span class="nd">0</span><span class="nd">0</span></div>
<div class="a nn" style="left:1234.2px;top:514.5px"><span class="nd">0</span><span class="np">.</span><span class="nd">0</span><span class="nd">0</span><span class="nd">0</span></div>
<div class="a nn" style="left:1345.2px;top:514.5px"><span class="nd">0</span><span class="np">.</span><span class="nd">0</span><span class="nd">0</span><span class="nm">%</span></div>
<div class="a nn" style="left:1636.7px;top:514.6px"><span class="nd">2</span><span class="nd">0</span><span class="nd">1</span><span class="nd">8</span><span class="nm">&#8211;</span><span class="nd">0</span><span class="nd">8</span><span class="nm">&#8211;</span><span class="nd">3</span><span class="nd">1</span></div>
<div class="a nn" style="left:511.0px;top:541.8px"><span class="nd">3</span></div>
<div class="a nn" style="left:673.2px;top:541.7px"><span class="nd">1</span><span class="nd">8</span><span class="nd">0</span><span class="nd">0</span><span class="nd">0</span><span class="nd">0</span><span class="nd">0</span><span class="nd">0</span><span class="nd">0</span><span class="np">.</span><span class="nd">0</span><span class="nd">0</span><span class="nd">0</span></div>
<div class="a nn" style="left:826.2px;top:541.7px"><span class="nd">1</span><span class="nd">9</span><span class="nd">0</span><span class="nd">0</span><span class="nd">0</span><span class="nd">0</span><span class="nd">0</span><span class="nd">0</span><span class="nd">0</span><span class="np">.</span><span class="nd">0</span><span class="nd">0</span><span class="nd">0</span></div>
<div class="a nn" style="left:972.2px;top:541.7px"><span class="nd">9</span><span class="nd">0</span><span class="nd">0</span><span class="nd">0</span><span class="nd">0</span><span class="nd">0</span><span class="nd">0</span><span class="nd">0</span><span class="np">.</span><span class="nd">0</span><span class="nd">0</span><span class="nd">0</span></div>
<div class="a nn" style="left:1178.2px;top:541.7px"><span class="nd">1</span><span class="nd">0</span><span class="nd">0</span><span class="nd">0</span><span class="nd">0</span><span class="nd">0</span><span class="nd">0</span><span class="nd">0</span><span class="nd">0</span><span class="np">.</span><span class="nd">0</span><span class="nd">0</span><span class="nd">0</span></div>
<div class="a nn" style="left:1338.2px;top:541.7px"><span class="nd">5</span><span class="nd">2</span><span class="np">.</span><span class="nd">6</span><span class="nd">3</span><span class="nm">%</span></div>
<div class="a nn" style="left:1636.7px;top:541.8px"><span class="nd">2</span><span class="nd">0</span><span class="nd">1</span><span class="nd">8</span><span class="nm">&#8211;</span><span class="nd">0</span><span class="nd">8</span><span class="nm">&#8211;</span><span class="nd">2</span><span class="nd">7</span></div>
<div class="a nn" style="left:511.0px;top:569.0px"><span class="nd">4</span></div>
<div class="a nn" style="left:687.2px;top:568.9px"><span class="nd">1</span><span class="nd">0</span><span class="nd">0</span><span class="nd">0</span><span class="nd">0</span><span class="nd">0</span><span class="nd">0</span><span class="np">.</span><span class="nd">0</span><span class="nd">0</span><span class="nd">0</span></div>
<div class="a nn" style="left:847.2px;top:568.9px"><span class="nd">9</span><span class="nd">0</span><span class="nd">0</span><span class="nd">0</span><span class="nd">0</span><span class="nd">0</span><span class="np">.</span><span class="nd">0</span><span class="nd">0</span><span class="nd">0</span></div>
<div class="a nn" style="left:986.2px;top:568.9px"><span class="nd">9</span><span class="nd">0</span><span class="nd">0</span><span class="nd">0</span><span class="nd">0</span><span class="nd">0</span><span class="np">.</span><span class="nd">0</span><span class="nd">0</span><span class="nd">0</span></div>
<div class="a nn" style="left:1234.2px;top:568.9px"><span class="nd">0</span><span class="np">.</span><span class="nd">0</span><span class="nd">0</span><span class="nd">0</span></div>
<div class="a nn" style="left:1345.2px;top:568.9px"><span class="nd">0</span><span class="np">.</span><span class="nd">0</span><span class="nd">0</span><span class="nm">%</span></div>
<div class="a nn" style="left:1636.7px;top:569.0px"><span class="nd">2</span><span class="nd">0</span><span class="nd">1</span><span class="nd">8</span><span class="nm">&#8211;</span><span class="nd">0</span><span class="nd">8</span><span class="nm">&#8211;</span><span class="nd">2</span><span class="nd">4</span></div>
<div class="a nn" style="left:511.0px;top:596.1px"><span class="nd">5</span></div>
<div class="a nn" style="left:701.2px;top:596.0px"><span class="nd">6</span><span class="nd">9</span><span class="nd">8</span><span class="nd">8</span><span class="nd">0</span><span class="np">.</span><span class="nd">0</span><span class="nd">0</span><span class="nd">0</span></div>
<div class="a nn" style="left:854.2px;top:596.0px"><span class="nd">6</span><span class="nd">9</span><span class="nd">8</span><span class="nd">8</span><span class="nd">0</span><span class="np">.</span><span class="nd">0</span><span class="nd">0</span><span class="nd">0</span></div>
<div class="a nn" style="left:993.2px;top:596.0px"><span class="nd">6</span><span class="nd">9</span><span class="nd">8</span><span class="nd">8</span><span class="nd">0</span><span class="np">.</span><span class="nd">0</span><span class="nd">0</span><span class="nd">0</span></div>
<div class="a nn" style="left:1234.2px;top:596.0px"><span class="nd">0</span><span class="np">.</span><span class="nd">0</span><span class="nd">0</span><span class="nd">0</span></div>
<div class="a nn" style="left:1345.2px;top:596.0px"><span class="nd">0</span><span class="np">.</span><span class="nd">0</span><span class="nd">0</span><span class="nm">%</span></div>
<div class="a nn" style="left:1636.7px;top:596.1px"><span class="nd">2</span><span class="nd">0</span><span class="nd">1</span><span class="nd">4</span><span class="nm">&#8211;</span><span class="nd">0</span><span class="nd">8</span><span class="nm">&#8211;</span><span class="nd">2</span><span class="nd">0</span></div>
<div class="a nn" style="left:511.0px;top:623.3px"><span class="nd">6</span></div>
<div class="a nn" style="left:694.2px;top:623.2px"><span class="nd">2</span><span class="nd">9</span><span class="nd">0</span><span class="nd">0</span><span class="nd">0</span><span class="nd">0</span><span class="np">.</span><span class="nd">0</span><span class="nd">0</span><span class="nd">0</span></div>
<div class="a nn" style="left:882.2px;top:623.2px"><span class="nd">0</span><span class="np">.</span><span class="nd">0</span><span class="nd">0</span><span class="nd">0</span></div>
<div class="a nn" style="left:1021.2px;top:623.2px"><span class="nd">0</span><span class="np">.</span><span class="nd">0</span><span class="nd">0</span><span class="nd">0</span></div>
<div class="a nn" style="left:1234.2px;top:623.2px"><span class="nd">0</span><span class="np">.</span><span class="nd">0</span><span class="nd">0</span><span class="nd">0</span></div>
<div class="a nn" style="left:1345.2px;top:623.2px"><span class="nd">0</span><span class="np">.</span><span class="nd">0</span><span class="nd">0</span><span class="nm">%</span></div>
<div class="a nn" style="left:1636.7px;top:623.3px"><span class="nd">2</span><span class="nd">0</span><span class="nd">1</span><span class="nd">4</span><span class="nm">&#8211;</span><span class="nd">0</span><span class="nd">8</span><span class="nm">&#8211;</span><span class="nd">0</span><span class="nd">6</span></div>
<div class="a nn" style="left:683.2px;top:650.4px"><span class="nd">2</span><span class="nd">1</span><span class="nd">6</span><span class="nd">3</span><span class="nd">5</span><span class="nd">9</span><span class="nd">8</span><span class="nd">8</span><span class="nd">0</span><span class="np">.</span><span class="nd">0</span><span class="nd">0</span></div>
<div class="a nn" style="left:836.2px;top:650.4px"><span class="nd">2</span><span class="nd">3</span><span class="nd">0</span><span class="nd">4</span><span class="nd">6</span><span class="nd">9</span><span class="nd">8</span><span class="nd">8</span><span class="nd">0</span><span class="np">.</span><span class="nd">0</span><span class="nd">0</span></div>
<div class="a nn" style="left:975.2px;top:650.4px"><span class="nd">1</span><span class="nd">3</span><span class="nd">0</span><span class="nd">4</span><span class="nd">6</span><span class="nd">9</span><span class="nd">8</span><span class="nd">8</span><span class="nd">0</span><span class="np">.</span><span class="nd">0</span><span class="nd">0</span></div>
<div class="a nn" style="left:1189.2px;top:650.4px"><span class="nd">1</span><span class="nd">0</span><span class="nd">0</span><span class="nd">0</span><span class="nd">0</span><span class="nd">0</span><span class="nd">0</span><span class="nd">0</span><span class="nd">0</span><span class="np">.</span><span class="nd">0</span><span class="nd">0</span></div>
<div class="a sb" style="left:538px;top:822px;width:1206px;height:13px"></div>
<div class="a th" style="left:638px;top:822px;width:1048px;height:13px"></div>
<svg class="a" style="left:543px;top:826px" width="8" height="7"><path d="M7 0h-2.8l-4 3.5 4 3.5h2.8l-4-3.5z" fill="#575757"/></svg>
<svg class="a" style="left:1735px;top:826px" width="8" height="7"><path d="M0 0h2.8l4 3.5-4 3.5h-2.8l4-3.5z" fill="#575757"/></svg>
<div class="a" style="left:493px;top:835px;width:1251px;height:39px;border-top:1px solid #95b8e7;background:linear-gradient(#dfe9f6,#cfdcef)"></div>
<div class="a" style="left:494px;top:836px;width:1px;height:38px;background:#a9c4ea"></div>
<div class="a" style="left:500px;top:843px;width:44px;height:22px;border:1px solid #8c8c8c;background:#fff"></div>
<div class="a" style="left:506px;top:847px;font-size:14px;line-height:16px;color:#000">20</div>
<svg class="a" style="left:529px;top:851px" width="10" height="7"><path d="M1 1l4 4 4-4" stroke="#555" stroke-width="1.2" fill="none"/></svg>
<svg class="a" style="left:555px;top:846px" width="170" height="20" fill="#a6b9d8">
<rect x="5" y="3" width="3.5" height="12.5"/><path d="M17 3v12.5l-8.5-6.25z"/>
<path d="M37 3.5v12.5l-7-6.25z"/>
<path d="M130 3.5v12.5l7-6.25z"/>
<path d="M151 3v12.5l8.5-6.25z"/><rect x="159" y="3" width="3.5" height="12.5"/></svg>
<div class="a" style="left:613px;top:842px;width:25px;height:20px;border:1px solid #8c8c8c;background:#fff"></div>
<div class="a" style="left:616px;top:845px;font-size:14px;line-height:15px;color:#000">1</div>
<div class="a" style="left:643px;top:848px;font-family:'Liberation Mono',monospace;font-size:13px;letter-spacing:-0.8px;color:#000;white-space:nowrap;line-height:14px">/</div>
<div class='a' style="left:659px;top:849px;font-family:'Liberation Mono',monospace;font-size:11px;line-height:12px;color:#000">1</div>
<div class="a" style="left:1522px;top:844px;width:217px;text-align:right;font-family:'Liberation Mono',monospace;font-size:13px;letter-spacing:-0.8px;color:#000;white-space:nowrap;line-height:14px">Displaying 1 - 6, 6 items total</div>
</body></html>
